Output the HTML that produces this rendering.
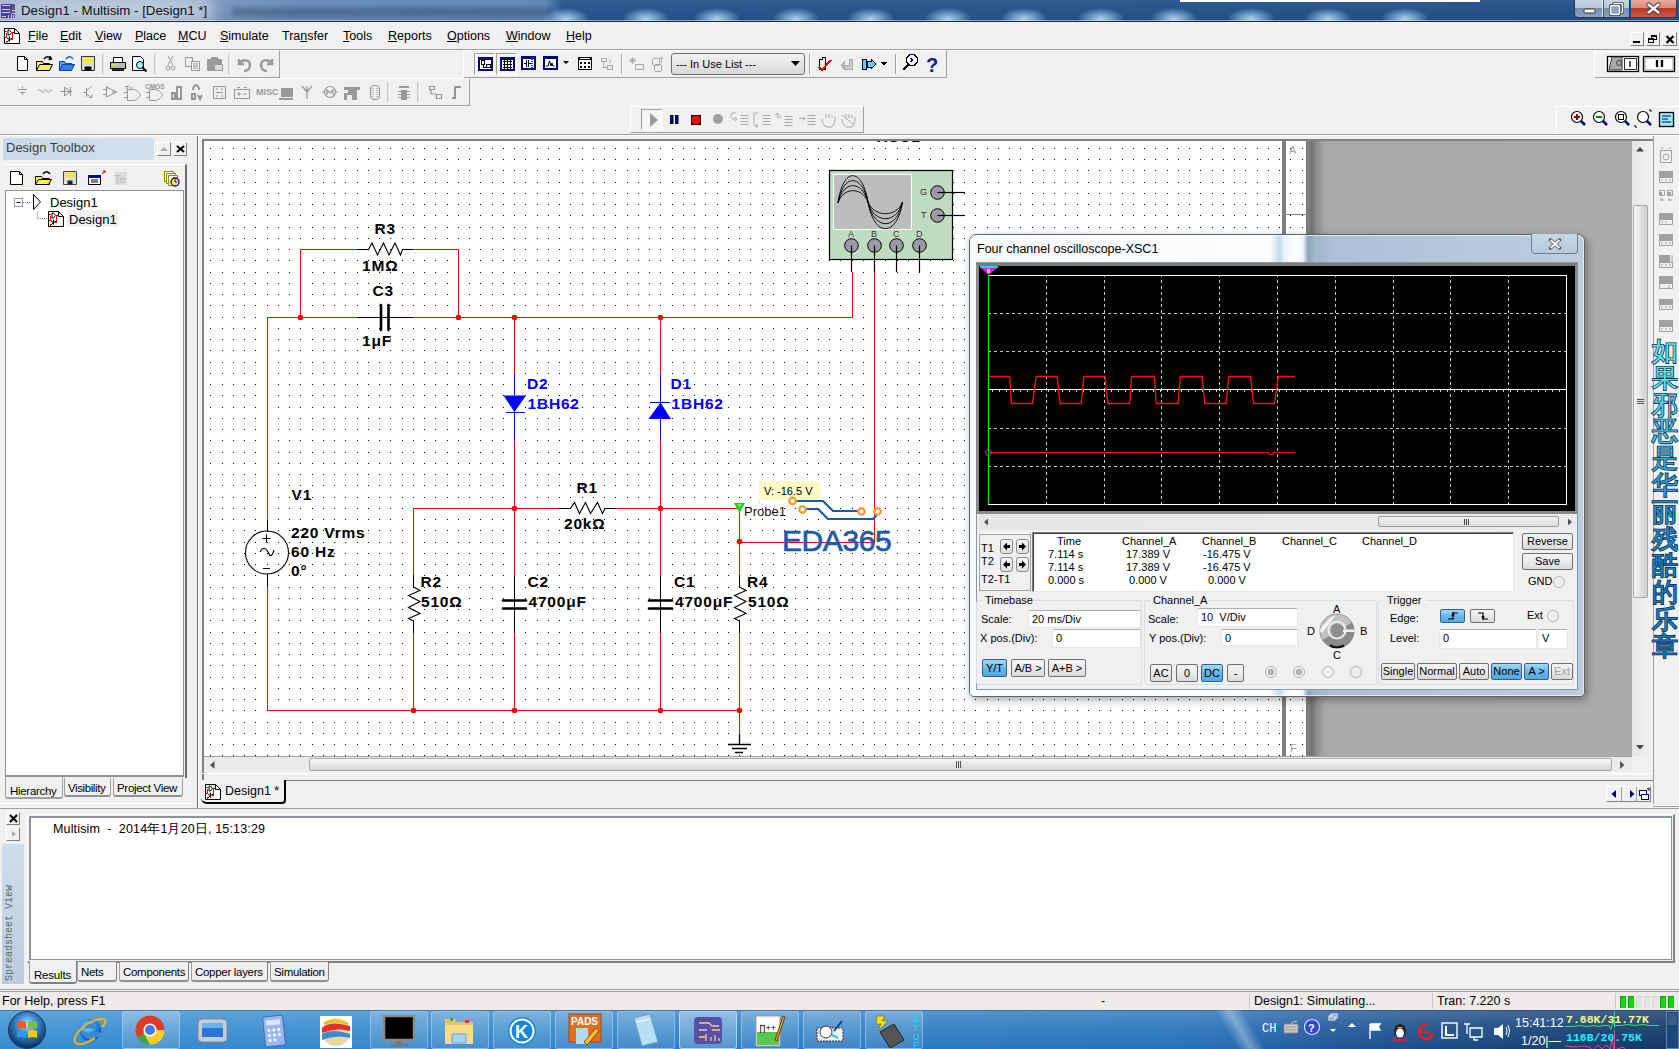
<!DOCTYPE html>
<html><head><meta charset="utf-8">
<style>
*{box-sizing:border-box}
html,body{margin:0;padding:0}
body{width:1679px;height:1049px;position:relative;overflow:hidden;background:#f0f0f0;font-family:"Liberation Sans",sans-serif;font-size:12px;color:#000}
.a{position:absolute}
.t{position:absolute;white-space:nowrap;line-height:1}
u{text-decoration:underline;text-underline-offset:1px;text-decoration-thickness:1px}
</style></head><body>

<!-- TITLE BAR -->
<div class="a" id="title" style="left:0;top:0;width:1679px;height:22px;background:linear-gradient(90deg,#a4b8d0 0,#aabdd4 150px,#9ab0cc 200px,#7494be 225px,#6088b8 300px,#5a84b6 545px,#23528c 562px,#22508a 100%)">
  <div class="a" style="left:0;top:0;width:1679px;height:21px;background:radial-gradient(ellipse 24px 11px at 566px 19px,rgba(185,222,248,.95),rgba(160,205,240,.5) 55%,rgba(160,205,240,0) 100%),radial-gradient(ellipse 24px 11px at 646px 19px,rgba(185,222,248,.95),rgba(160,205,240,.5) 55%,rgba(160,205,240,0) 100%),radial-gradient(ellipse 24px 11px at 717px 19px,rgba(185,222,248,.95),rgba(160,205,240,.5) 55%,rgba(160,205,240,0) 100%),radial-gradient(ellipse 24px 11px at 796px 19px,rgba(185,222,248,.95),rgba(160,205,240,.5) 55%,rgba(160,205,240,0) 100%),radial-gradient(ellipse 24px 11px at 871px 19px,rgba(185,222,248,.95),rgba(160,205,240,.5) 55%,rgba(160,205,240,0) 100%),radial-gradient(ellipse 24px 11px at 948px 19px,rgba(185,222,248,.95),rgba(160,205,240,.5) 55%,rgba(160,205,240,0) 100%),radial-gradient(ellipse 24px 11px at 1024px 19px,rgba(185,222,248,.95),rgba(160,205,240,.5) 55%,rgba(160,205,240,0) 100%),radial-gradient(ellipse 24px 11px at 1101px 19px,rgba(185,222,248,.95),rgba(160,205,240,.5) 55%,rgba(160,205,240,0) 100%),radial-gradient(ellipse 24px 11px at 1174px 19px,rgba(185,222,248,.95),rgba(160,205,240,.5) 55%,rgba(160,205,240,0) 100%),radial-gradient(ellipse 24px 11px at 1251px 19px,rgba(185,222,248,.95),rgba(160,205,240,.5) 55%,rgba(160,205,240,0) 100%),radial-gradient(ellipse 24px 11px at 1328px 19px,rgba(185,222,248,.95),rgba(160,205,240,.5) 55%,rgba(160,205,240,0) 100%),radial-gradient(ellipse 24px 11px at 1405px 19px,rgba(185,222,248,.95),rgba(160,205,240,.5) 55%,rgba(160,205,240,0) 100%)"></div>
  <div class="a" style="left:0;top:0;width:1679px;height:21px;background:linear-gradient(180deg,rgba(255,255,255,.06),rgba(0,0,0,.03))"></div>
<div class="a" style="left:1180px;top:0;width:300px;height:2px;background:#fff"></div>
  <svg class="a" style="left:1px;top:4px" width="15" height="14"><rect x="0" y="0" width="14" height="14" rx="1" fill="#4a3c9a"/><path d="M1 1.5H9M1 5.5H9M1 8.5H9" stroke="#d8d0f0" stroke-width="1"/><path d="M11 6.5H14M11 9.5H14M1 12.5H5M1 15.5H5" stroke="#f0c878" stroke-width="1"/><path d="M7.5 11V14M10.5 10V14M12.5 11V14" stroke="#c8c0f0"/></svg>
  <div class="a" style="left:232px;top:8px;width:320px;height:8px;background:rgba(35,45,75,.35);filter:blur(2.5px)"></div><div class="a" style="left:14px;top:2px;width:200px;height:18px;background:rgba(220,230,242,.35);filter:blur(4px);border-radius:8px"></div><div class="t" style="left:21px;top:4px;font-size:13.3px;color:#111">Design1 - Multisim - [Design1 *]</div>
  <div class="a" style="left:1574px;top:0;width:103px;height:18px;border:1px solid #2e3c50;border-top:none;border-radius:0 0 5px 5px;overflow:hidden;background:linear-gradient(90deg,transparent 0,transparent 55px,rgba(0,0,0,0) 55px)">
   <div class="a" style="left:0;top:0;width:28px;height:17px;background:linear-gradient(180deg,#c6d3e2 0,#b8c8da 45%,#7890ae 50%,#8aa2be 100%);border-right:1px solid #e8eef5"></div>
   <div class="a" style="left:29px;top:0;width:26px;height:17px;background:linear-gradient(180deg,#c6d3e2 0,#b8c8da 45%,#7890ae 50%,#8aa2be 100%);border-right:1px solid #6a1a10"></div>
   <div class="a" style="left:56px;top:0;width:47px;height:17px;background:linear-gradient(180deg,#e8aaa0 0,#d88a7c 45%,#b83a24 50%,#d05a40 100%)"></div>
  </div>
  <svg class="a" style="left:1574px;top:0" width="103" height="18">
   <rect x="10" y="9" width="11" height="4" rx="1" fill="#fff" stroke="#333" stroke-width="1"/>
   <rect x="39.5" y="3.5" width="9" height="9" rx="1" fill="none" stroke="#333" stroke-width="3"/><rect x="39.5" y="3.5" width="9" height="9" rx="1" fill="none" stroke="#fff" stroke-width="1.5"/>
   <rect x="36.5" y="5.5" width="9" height="9" rx="1" fill="#8aa2be" stroke="#333" stroke-width="3"/><rect x="36.5" y="5.5" width="9" height="9" rx="1" fill="#8aa2be" stroke="#fff" stroke-width="1.5"/>
   <path d="M74.5 4.5L84.5 12.5M84.5 4.5L74.5 12.5" stroke="#3a3a3a" stroke-width="4.2" stroke-linecap="round"/>
   <path d="M74.5 4.5L84.5 12.5M84.5 4.5L74.5 12.5" stroke="#fff" stroke-width="2.4" stroke-linecap="round"/>
  </svg>
  <div class="a" style="left:0;top:20px;width:1679px;height:1px;background:rgba(220,232,242,.55)"></div><div class="a" style="left:0;top:21px;width:1679px;height:1px;background:#1e2e40"></div>
</div>

<!-- MENU BAR -->
<div class="a" style="left:0;top:22px;width:1679px;height:27px;background:#f0f0f0"></div>
<div class="a" style="left:0;top:49px;width:1679px;height:1px;background:#a0a0a0"></div>


<!-- MENU -->
<svg class="a" style="left:4px;top:28px" width="17" height="17" viewBox="0 0 17 17"><path d="M0.5 0.5H10.5L15.5 5.5V15.5H0.5z" fill="#fff" stroke="#000"/><path d="M10.5 0.5V5.5H15.5" fill="none" stroke="#000"/><path d="M1 3.5H3M2.5 5V9.5M1 9.5H3M8.5 4.5V11.5M8 4.5H10M7 11.5H9M2.5 13V15" stroke="#f00" fill="none"/><path d="M4 2h1.5l2 2.5-2 2.5H4z" fill="none" stroke="#000"/><path d="M5.5 8.5v5M3 10l2.5 1.5 3-1.5M3 14l2.5-2.5" fill="none" stroke="#000"/></svg>
<div class="t" style="left:28px;top:30px;font-size:12.5px"><u>F</u>ile</div>
<div class="t" style="left:60px;top:30px;font-size:12.5px"><u>E</u>dit</div>
<div class="t" style="left:95px;top:30px;font-size:12.5px"><u>V</u>iew</div>
<div class="t" style="left:135px;top:30px;font-size:12.5px"><u>P</u>lace</div>
<div class="t" style="left:178px;top:30px;font-size:12.5px"><u>M</u>CU</div>
<div class="t" style="left:220px;top:30px;font-size:12.5px"><u>S</u>imulate</div>
<div class="t" style="left:282px;top:30px;font-size:12.5px">Tra<u>n</u>sfer</div>
<div class="t" style="left:343px;top:30px;font-size:12.5px"><u>T</u>ools</div>
<div class="t" style="left:388px;top:30px;font-size:12.5px"><u>R</u>eports</div>
<div class="t" style="left:447px;top:30px;font-size:12.5px"><u>O</u>ptions</div>
<div class="t" style="left:506px;top:30px;font-size:12.5px"><u>W</u>indow</div>
<div class="t" style="left:566px;top:30px;font-size:12.5px"><u>H</u>elp</div>
<!-- MDI buttons -->
<div class="a" style="left:1630px;top:32px;width:14px;height:14px;background:#f0f0f0;border:1px solid;border-color:#fff #808080 #808080 #fff"></div>
<div class="a" style="left:1633px;top:41px;width:7px;height:2px;background:#000"></div>
<div class="a" style="left:1646px;top:32px;width:14px;height:14px;background:#f0f0f0;border:1px solid;border-color:#fff #808080 #808080 #fff"></div>
<div class="a" style="left:1651px;top:35px;width:6px;height:5px;border:1px solid #000;border-top-width:2px"></div>
<div class="a" style="left:1648px;top:38px;width:6px;height:5px;border:1px solid #000;border-top-width:2px;background:#f0f0f0"></div>
<div class="a" style="left:1662px;top:32px;width:15px;height:14px;background:#f0f0f0;border:1px solid;border-color:#fff #808080 #808080 #fff"></div>
<svg class="a" style="left:1665px;top:35px" width="10" height="9"><path d="M1.5 1L8.5 8M8.5 1L1.5 8" stroke="#000" stroke-width="2.2"/></svg>

<!-- TOOLBAR AREA -->

<!-- PANEL separator -->
<div class="a" style="left:0;top:134px;width:1679px;height:1px;background:#a0a0a0"></div>

<!-- SCHEMATIC -->
<div class="a" style="left:204px;top:140px;width:1080px;height:616px;background:#fff"></div>

<!-- STATUS BAR -->
<div class="a" style="left:0;top:989px;width:1679px;height:1px;background:#a0a0a0"></div>
<div class="a" style="left:0;top:991px;width:1679px;height:1px;background:#a0a0a0"></div>

<!-- TASKBAR -->
<div class="a" style="left:0;top:1010px;width:1679px;height:39px;background:linear-gradient(180deg,#3f86c6,#2d79bd 50%,#2a73b5)"></div>

<!-- TOOLBARS -->
<div class="a" style="left:0;top:50px;width:280px;height:28px;border-top:1px solid #fff;border-right:1px solid #a0a0a0;border-bottom:1px solid #a0a0a0"></div>
<div class="a" style="left:463px;top:50px;width:484px;height:28px;border-left:1px solid #fff;border-top:1px solid #fff;border-right:1px solid #a0a0a0;border-bottom:1px solid #a0a0a0"></div>
<div class="a" style="left:1594px;top:51px;width:85px;height:27px;border-left:1px solid #fff;border-top:1px solid #fff;border-bottom:1px solid #a0a0a0"></div>
<div class="a" style="left:0;top:78px;width:470px;height:28px;border-top:1px solid #fff;border-right:1px solid #a0a0a0;border-bottom:1px solid #a0a0a0"></div>
<div class="a" style="left:630px;top:106px;width:234px;height:27px;border-left:1px solid #fff;border-top:1px solid #fff;border-right:1px solid #a0a0a0;border-bottom:1px solid #a0a0a0"></div>
<div class="a" style="left:1556px;top:106px;width:123px;height:28px;border-left:1px solid #fff;border-top:1px solid #fff"></div>

<!-- standard toolbar icons -->
<svg class="a" style="left:0;top:50px" width="280" height="28">
 <g stroke="#000" fill="#fff" stroke-width="1">
  <path d="M17.5 6.5h7l3 3v11h-10z"/><path d="M24.5 6.5v3h3" fill="none"/>
  <path d="M36.5 11.5h6l1 2h6v7h-13z" fill="#ffff40"/><path d="M36.5 20.5l3-6h13l-3 6z" fill="#f8f060"/><path d="M44 9c2-3 5-3 7 0" fill="none" stroke-width="1.5"/><path d="M50 6l2 3-3 1z" fill="#000"/>
  <path d="M59.5 11.5h5l1 2h6v7h-12z" fill="#5aa0f0" stroke="#1040a0"/><path d="M59.5 20.5l3-6h12l-3 6z" fill="#3080e0" stroke="#1040a0"/><path d="M66 9c2-3 5-3 7 0" fill="none" stroke="#1060d0" stroke-width="1.5"/>
  <path d="M81.5 6.5h13v14h-13z" fill="#ddd" stroke="#333"/><path d="M83.5 7.5h9v6h-9z" fill="#f4e640" stroke="none"/><path d="M84.5 16.5h7v4h-7z" fill="#000" stroke="none"/>
 </g>
 <path d="M103 4v20" stroke="#a0a0a0"/><path d="M104 4v20" stroke="#fff"/>
 <g stroke="#000" fill="#fff">
  <path d="M113.5 7.5h9v5h-9z"/><path d="M110.5 12.5h15v6h-15z" fill="#bbb"/><path d="M112.5 18.5h11v2h-11z" fill="#444"/><path d="M112 15h4" stroke="#ff0"/>
  <path d="M132.5 6.5h8l3 3v11h-11z"/><circle cx="140" cy="15" r="3.5" fill="#9ff" stroke="#000"/><path d="M142.5 17.5l4 4" stroke-width="2"/>
 </g>
 <path d="M155 4v20" stroke="#a0a0a0"/><path d="M156 4v20" stroke="#fff"/>
 <g stroke="#999" fill="none" stroke-width="1">
  <path d="M168 6l5 9M173 6l-5 9"/><circle cx="168" cy="18" r="2"/><circle cx="173" cy="18" r="2"/>
  <path d="M185.5 7.5h7v9h-7z"/><path d="M191.5 11.5h8v9h-8z" fill="#f0f0f0"/><path d="M193 14h5M193 16h5M193 18h5"/>
  <path d="M207.5 9.5h14v11h-14z" fill="#999"/><path d="M211.5 7.5h6v3h-6z" fill="#999"/><path d="M214.5 14.5h8v6h-8z" fill="#ddd"/>
 </g>
 <path d="M229 4v20" stroke="#a0a0a0"/><path d="M230 4v20" stroke="#fff"/>
 <g stroke="#999" fill="none" stroke-width="2.5">
  <path d="M239 9v5h5"/><path d="M239 14c3-5 11-5 11 1c0 4-3 6-6 6"/>
  <path d="M272 9v5h-5"/><path d="M272 14c-3-5-11-5-11 1c0 4 3 6 6 6"/>
 </g>
</svg>

<!-- component toolbar icons -->
<svg class="a" style="left:0;top:78px" width="470" height="28">
 <g stroke="#959595" fill="none" stroke-width="1">
  <path d="M22.5 8.5v2M18 11.5h9M20 14.5h5M22.5 15v2"/>
  <path d="M38 13c1-2 2-2 3 0s2 2 3 0 2-2 3 0 2 2 3 0 1-1 2 0"/>
  <path d="M60 13.5h12M64.5 9v9M64.5 9l6 4.5-6 4.5M70.5 9v9"/>
  <path d="M83 14.5h3M86.5 10v9M86.5 12.5l5-4M86.5 16l5 3.5M89 19.5h3v-3"/>
  <path d="M103 11.5h3M103 16.5h3M106.5 9v10l10-5zM112 14h5M107 8v3"/>
  <path d="M124 14.5h3M124 19.5h3M127.5 11.5h5c5 0 7 4 8 5.5c-1 1.5-3 5.5-8 5.5h-5z"/><path d="M125 8.5h4M127 8.5v3M131 8.5v3h2" stroke-width="1.1"/>
  <path d="M146 14.5h3M146 19.5h3M149.5 11.5h5c5 0 7 4 8 5.5c-1 1.5-3 5.5-8 5.5h-5z"/>
 </g>
 <text x="145" y="11" font-size="6.5" font-family="Liberation Sans" font-weight="bold" fill="#959595">CMOS</text>
 <g stroke="#959595" fill="none" stroke-width="2">
  <path d="M172 15v6h3v-6zM177 9h4v12h-4z"/>
  <path d="M193 12c0-3 2-5 3-5s3 2 3 5M192 16v5h3v-5zM198 17l2 4 2-4M200 21v-3M196 20h-2"/>
 </g>
 <g stroke="#959595" fill="none" stroke-width="1">
  <path d="M213.5 8.5h12v12h-12zM216 11h2M221 11h2M216 14.5h7M216 18h2M221 18h2"/>
  <path d="M234.5 11.5h15v9h-15zM237 9.5h3M244 9.5h3M237 16h4M239 14v4M243.5 16h3"/>
 </g>
 <text x="256" y="17" font-size="9" font-family="Liberation Sans" font-weight="bold" fill="#999">MISC</text>
 <g fill="#999" stroke="none">
  <path d="M281 10h12v9h-12zM279 20h14v2h-14z"/>
  <path d="M344 9h16v3h-3v10h-5v-5h-5v5h-3v-7h4v-3h-4z"/>
  <path d="M399 8h10v2h-10zM401 12h6v10h-6zM398 13h3v1h-3zM398 16h3v1h-3zM398 19h3v1h-3zM407 13h3v1h-3zM407 16h3v1h-3zM407 19h3v1h-3z"/>
 </g>
 <g stroke="#959595" fill="none" stroke-width="1.2">
  <path d="M302 8l5 6 5-6M307 8v13"/>
  <circle cx="330" cy="14" r="5.5"/><path d="M322 14h2.5M335.5 14h2.5M327 17v-5l3 3 3-3v5"/>
  <rect x="370.5" y="7.5" width="9" height="14" rx="4"/><path d="M373 10v9M377 10v9" stroke-dasharray="1 1"/>
  <path d="M429.5 8.5h5v3h-5zM436.5 16.5h5v4h-5zM431 12v4h5" /><path d="M452 20h3v-11h6"  stroke-width="2"/>
 </g>
 <path d="M388 4v20" stroke="#a0a0a0"/><path d="M389 4v20" stroke="#fff"/>
 <path d="M418 4v20" stroke="#a0a0a0"/><path d="M419 4v20" stroke="#fff"/>
</svg>

<!-- middle toolbar -->
<div class="a" style="left:474px;top:53px;width:21px;height:22px;border:1px solid;border-color:#a0a0a0 #fff #fff #a0a0a0;background:#f5f5f5"></div>
<div class="a" style="left:496px;top:53px;width:21px;height:22px;border:1px solid;border-color:#a0a0a0 #fff #fff #a0a0a0;background:#f5f5f5"></div>
<svg class="a" style="left:463px;top:50px" width="484" height="28" shape-rendering="crispEdges">
 <g fill="#000080"><rect x="15" y="7" width="15" height="14"/><rect x="37" y="7" width="15" height="14"/><rect x="58" y="6" width="15" height="14"/><rect x="80" y="6" width="15" height="14"/></g>
 <g fill="#fff"><rect x="17" y="10" width="11" height="9"/><rect x="39" y="10" width="11" height="9"/><rect x="60" y="9" width="11" height="9"/><rect x="82" y="9" width="11" height="9"/></g>
 <g fill="#000">
  <rect x="18" y="10" width="4" height="1"/><rect x="18" y="10" width="1" height="5"/><rect x="21" y="10" width="1" height="5"/><rect x="18" y="14" width="4" height="1"/><rect x="20" y="15" width="1" height="3"/><rect x="20" y="17" width="3" height="1"/>
  <rect x="23" y="14" width="5" height="1"/><rect x="23" y="14" width="1" height="4"/><rect x="27" y="14" width="1" height="4"/><rect x="23" y="17" width="5" height="1"/>
  <rect x="40" y="11" width="9" height="1"/><rect x="40" y="14" width="9" height="1"/><rect x="40" y="17" width="9" height="1"/><rect x="41" y="10" width="1" height="9"/><rect x="44" y="10" width="1" height="9"/><rect x="47" y="10" width="1" height="9"/>
  <rect x="61" y="13" width="2" height="1"/><rect x="63" y="10" width="1" height="7"/><rect x="65" y="10" width="1" height="7"/><rect x="66" y="13" width="2" height="1"/>
 </g>
 <g fill="#e00"><rect x="68" y="9" width="2" height="1"/><rect x="68" y="11" width="2" height="1"/><rect x="68" y="13" width="2" height="1"/><rect x="68" y="15" width="2" height="1"/><rect x="68" y="17" width="2" height="1"/></g>
 <g shape-rendering="auto"><path d="M83 16h2l1.5-5 1.5 5 1-3 1 3h1.5" stroke="#000" fill="none" stroke-width="1"/><path d="M100 11h6l-3 3z" fill="#000"/></g>
 <rect x="115" y="7" width="14" height="13" fill="#000"/><rect x="116" y="10" width="12" height="9" fill="#fff"/><rect x="117" y="8" width="10" height="1" fill="#fff"/>
 <g fill="#000"><rect x="117" y="12" width="2" height="2"/><rect x="121" y="12" width="2" height="2"/><rect x="125" y="12" width="2" height="2"/><rect x="117" y="16" width="2" height="2"/><rect x="121" y="16" width="2" height="2"/><rect x="125" y="16" width="2" height="2"/></g>
 <g stroke="#a8a8a8" fill="none">
  <path d="M138.5 8.5h5v3h-5zM144.5 15.5h5v4h-5zM140 12v5h4M146 9l2 2-2 2"/>
  <path d="M167 8l5 5M172 8l-5 5M166 10h7M169 7v7M172.5 14.5h8v5h-8z"/>
  <circle cx="193" cy="12" r="4"/><circle cx="195" cy="18" r="4"/><path d="M198 7v6M196 9l2-2 2 2"/>
 </g>
 <path d="M158 4v20" stroke="#a0a0a0"/><path d="M159 4v20" stroke="#fff"/>
 <path d="M346 4v20" stroke="#a0a0a0"/><path d="M347 4v20" stroke="#fff"/>
 <path d="M432 4v20" stroke="#a0a0a0"/><path d="M433 4v20" stroke="#fff"/>
 <g stroke="#000" fill="none">
  <path d="M356.5 9.5h3v-2h3v12h-6z"/><path d="M356 17l3 3 9-10" stroke="#e00" stroke-width="2"/>
  <path d="M378 15h8v-6h3v10h-8zM378 15l3-3v6z" stroke="#aaa" fill="#ccc"/>
  <path d="M399.5 9.5h4v10h-4zM404 11h4v-2l5 5-5 5v-2h-4z" fill="#6cf" stroke="#000"/>
  <path d="M418 12h6l-3 3z" fill="#000"/>
  <circle cx="449" cy="10" r="5.5" stroke-width="1.3"/><path d="M445 15l-5 5" stroke-width="2"/><path d="M447 8l3 2-3 2" stroke="#00a"/>
 </g>
 <text x="463" y="22" font-size="20" font-weight="bold" font-family="Liberation Sans" fill="#1a1a8c">?</text>
</svg>
<div class="a" style="left:671px;top:53px;width:134px;height:22px;border:1px solid #707070;border-radius:3px;background:linear-gradient(#f2f2f2,#e6e6e6 50%,#d8d8d8)"></div>
<div class="t" style="left:676px;top:59px;font-size:11px;color:#000">--- In Use List ---</div>
<svg class="a" style="left:790px;top:60px" width="12" height="8"><path d="M1 1h9l-4.5 5z" fill="#000"/></svg>

<!-- right toolbar -->
<svg class="a" style="left:1594px;top:51px" width="85" height="27">
 <rect x="13.5" y="5.5" width="31" height="15" fill="#fff" stroke="#000" stroke-width="1.3"/>
 <path d="M15 19l3-13h10v13z" fill="#aaa" stroke="#333"/><circle cx="25" cy="12" r="2.5" fill="none" stroke="#444"/>
 <rect x="30.5" y="7.5" width="12" height="11" fill="#fff" stroke="#333"/><path d="M36 10v6" stroke="#000" stroke-width="1.3"/>
 <rect x="49.5" y="5.5" width="31" height="15" fill="#fff" stroke="#000" stroke-width="1.3"/><rect x="51" y="7" width="28" height="12" fill="none" stroke="#999"/>
 <path d="M63 9v7M68 9v7" stroke="#000" stroke-width="2.3"/>
</svg>

<!-- sim toolbar -->
<div class="a" style="left:641px;top:109px;width:21px;height:21px;border:1px solid;border-color:#a0a0a0 #fff #fff #a0a0a0;background:#f5f5f5"></div>
<svg class="a" style="left:630px;top:106px" width="234" height="27">
 <path d="M20 7l8 7-8 7z" fill="#9a9a9a"/>
 <rect x="40.5" y="9.5" width="2.5" height="8" fill="#00c" stroke="#000"/><rect x="45.5" y="9.5" width="2.5" height="8" fill="#00c" stroke="#000"/>
 <rect x="61.5" y="9.5" width="9" height="9" fill="#f00" stroke="#000"/>
 <circle cx="88" cy="13" r="5" fill="#a0a0a0"/>
 <g stroke="#a8a8a8" fill="none">
  <path d="M106 7h-3c-1 0-2 1-2 3s1 3 2 3h4M105 11l2 2-2 2M110.5 9.5h8M110.5 12.5h8M110.5 15.5h8M110.5 18.5h8"/>
  <path d="M128 7h-3c-1 0-1 1-1 2v9c0 1 1 2 2 2h2M126 22l2-2-2-2M132.5 9.5h8M132.5 12.5h8M132.5 15.5h8M132.5 18.5h8"/>
  <path d="M147.5 7v4h4M145.5 9l2-2 2 2M154.5 10.5h8M154.5 13.5h8M154.5 16.5h8M154.5 19.5h8"/>
  <path d="M169 12.5h6M173 10.5l2 2-2 2M177.5 9.5h8M177.5 12.5h8M177.5 15.5h8M177.5 18.5h8"/>
  <path d="M196 21c-3-3-4-5-4-8M196 21h6c2-2 3-5 3-8M199 12v-4M202 12v-3M205 13v-2M196 12v-4"/>
  <path d="M216 21c-3-3-4-5-4-8M216 21h6c2-2 3-5 3-8M219 12v-4M222 12v-3M225 13v-2M216 12v-4M212 9l12 10"/>
 </g>
</svg>

<!-- zoom toolbar -->
<svg class="a" style="left:1556px;top:106px" width="123" height="28">
 <g stroke="#000" fill="#fff" stroke-width="1.2">
  <circle cx="21" cy="11" r="5.5"/><circle cx="43" cy="11" r="5.5"/><circle cx="65" cy="11" r="5.5"/><circle cx="87" cy="11" r="5.5"/>
 </g>
 <g stroke="#000080" stroke-width="2.5"><path d="M25 15l4 4M47 15l4 4M69 15l4 4M91 15l4 4"/></g>
 <path d="M21 8v6M18 11h6" stroke="#800" stroke-width="2"/>
 <path d="M40 11h6" stroke="#080" stroke-width="2"/>
 <rect x="62.5" y="8.5" width="5" height="5" fill="none" stroke="#000"/>
 <path d="M93 4h2v2M79 19v2h2" stroke="#000" fill="none"/>
 <rect x="103.5" y="6.5" width="14" height="14" fill="#9ef" stroke="#000" stroke-width="1.3"/><path d="M106 10h9M106 13h6M106 16h9" stroke="#000080"/>
</svg>
<!-- LEFT PANEL -->
<div class="a" style="left:0;top:135px;width:1679px;height:1px;background:#fff"></div>
<div class="a" style="left:3px;top:138px;width:151px;height:22px;background:linear-gradient(90deg,#c9d9ea,#d3e0ee)"></div>
<div class="t" style="left:6px;top:141px;font-size:13px;color:#3c3c3c">Design Toolbox</div>
<div class="a" style="left:157px;top:142px;width:14px;height:14px;border:1px solid;border-color:#fff #808080 #808080 #fff"></div>
<svg class="a" style="left:159px;top:146px" width="10" height="6"><path d="M1 5l4-4 4 4z" fill="#aaa"/></svg>
<div class="a" style="left:173px;top:142px;width:14px;height:14px;border:1px solid;border-color:#fff #808080 #808080 #fff"></div>
<svg class="a" style="left:176px;top:145px" width="9" height="8"><path d="M1 1l7 6M8 1l-7 6" stroke="#000" stroke-width="2"/></svg>
<div class="a" style="left:4px;top:164px;width:183px;height:614px;border-top:1px solid #fff;border-right:2px solid #6c6c6c"></div>
<svg class="a" style="left:4px;top:166px" width="180" height="24">
 <g stroke="#000" fill="#fff">
  <path d="M6.5 5.5h9l3 3v10h-12z"/><path d="M15.5 5.5v3h3" fill="none"/><path d="M16 18l2-2v2z" fill="#ff0" stroke="none"/>
  <path d="M31.5 10.5h6l1 2h7v6h-14z" fill="#ffff40"/><path d="M31.5 18.5l3-5h13l-3 5z" fill="#f8f060"/><path d="M39 8c2-3 5-3 7 0" fill="none" stroke-width="1.5"/>
  <path d="M59.5 5.5h13v13h-13z" fill="#ddd" stroke="#444"/><path d="M61.5 6.5h9v5h-9z" fill="#f4e640" stroke="none"/><path d="M63.5 14.5h5v4h-5z" fill="#222" stroke="none"/>
  <path d="M84.5 9.5h12v9h-12z"/><path d="M84.5 9.5h12v2h-12z" fill="#00a" stroke="#00a"/><path d="M87 14h7M87 16h7"/><path d="M98 8l3-3M101 5v2M101 5h-2" stroke="#a00"/>
 </g>
 <rect x="111" y="6" width="12" height="13" fill="#ddd"/><text x="110" y="17" font-size="11" fill="#bbb" font-family="Liberation Sans">Te</text>
 <g stroke="#8a8a00" fill="#fff" stroke-width="1">
  <path d="M160.5 5.5h9v10h-9z"/><path d="M162.5 7.5h9v10h-9z"/><path d="M164.5 9.5h9v10h-9z"/>
 </g>
 <circle cx="171" cy="16" r="4" fill="#ff0" stroke="#00c" stroke-width="1.3"/><path d="M171 13v3h2" stroke="#00c" fill="none"/>
</svg>
<div class="a" style="left:5px;top:190px;width:179px;height:587px;background:#fff;border:1px solid #8a929c;border-bottom:2px solid #8a929c"></div>
<svg class="a" style="left:5px;top:190px" width="120" height="40">
 <rect x="9.5" y="8.5" width="8" height="8" fill="#fff" stroke="#999"/><path d="M11.5 12.5h4" stroke="#00a"/>
 <path d="M18 12.5h8M42 28.5h-10M32.5 28.5v-8" stroke="#777" stroke-dasharray="1 1"/>
 <path d="M28.5 4.5v15l7-7.5z" fill="none" stroke="#000"/>
 
 <rect x="62" y="20" width="51" height="17" fill="#f0f0f0"/>
</svg>
<svg class="a" style="left:48px;top:211px" width="17" height="17" viewBox="0 0 17 17"><path d="M0.5 0.5H10.5L15.5 5.5V15.5H0.5z" fill="#fff" stroke="#000"/><path d="M10.5 0.5V5.5H15.5" fill="none" stroke="#000"/><path d="M1 3.5H3M2.5 5V9.5M1 9.5H3M8.5 4.5V11.5M8 4.5H10M7 11.5H9M2.5 13V15" stroke="#f00" fill="none"/><path d="M4 2h1.5l2 2.5-2 2.5H4z" fill="none" stroke="#000"/><path d="M5.5 8.5v5M3 10l2.5 1.5 3-1.5M3 14l2.5-2.5" fill="none" stroke="#000"/></svg>
<div class="t" style="left:50px;top:196px;font-size:13px">Design1</div>
<div class="t" style="left:69px;top:213px;font-size:13px">Design1</div>
<!-- panel tabs -->
<div class="a" style="left:5px;top:777px;width:58px;height:22px;background:#f0f0f0;border:1px solid #a0a0a0;border-top:none;border-radius:0 0 3px 3px;border-bottom:2px solid #a0a0a0"></div>
<div class="t" style="left:10px;top:786px;font-size:11.5px;letter-spacing:-0.3px">Hierarchy</div>
<div class="a" style="left:64px;top:778px;width:47px;height:19px;background:#f0f0f0;border:1px solid #a0a0a0;border-top:none;border-radius:0 0 3px 3px;border-bottom:2px solid #909090"></div>
<div class="t" style="left:68px;top:783px;font-size:11.5px;letter-spacing:-0.4px">Visibility</div>
<div class="a" style="left:113px;top:778px;width:70px;height:19px;background:#f0f0f0;border:1px solid #a0a0a0;border-top:none;border-radius:0 0 3px 3px;border-bottom:2px solid #909090"></div>
<div class="t" style="left:117px;top:783px;font-size:11.5px;letter-spacing:-0.3px">Project View</div>
<div class="a" style="left:197px;top:136px;width:1px;height:672px;background:#707070"></div>
<div class="a" style="left:198px;top:136px;width:1px;height:672px;background:#fff"></div>
<!-- SCHEMATIC -->
<div class="a" style="left:202px;top:139px;width:1452px;height:642px;background:#f0f0f0;border-left:2px solid #808080;border-top:2px solid #808080;border-right:1px solid #a0a0a0;border-bottom:1px solid #a0a0a0"></div>
<svg class="a" style="left:0;top:0" width="1310" height="760" shape-rendering="crispEdges"><defs><pattern id="gd" patternUnits="userSpaceOnUse" x="210" y="148" width="45" height="45"><path d="M0 0h1v1h-1zM0 11h1v1h-1zM0 22h1v1h-1zM0 34h1v1h-1zM12 0h1v1h-1zM12 11h1v1h-1zM12 22h1v1h-1zM12 34h1v1h-1zM23 0h1v1h-1zM23 11h1v1h-1zM23 22h1v1h-1zM23 34h1v1h-1zM34 0h1v1h-1zM34 11h1v1h-1zM34 22h1v1h-1zM34 34h1v1h-1z" fill="#000"/></pattern></defs><rect x="204" y="141" width="1102" height="615" fill="#fff"/><rect x="204" y="141" width="1102" height="615" fill="url(#gd)"/></svg>
<div class="a" style="left:1282px;top:141px;width:4px;height:615px;background:#808080"></div>
<div class="a" style="left:1306px;top:141px;width:326px;height:615px;background:linear-gradient(90deg,#7a7a7a 0,#808080 4px,#6f6f6f 5px,#8e8e8e 11px,#a3a3a3 17px,#aaaaaa 22px,#ababab 100%)"></div>
<div class="a" style="left:1286px;top:214px;width:20px;height:1px;background:#808080"></div>
<div class="t" style="left:1289px;top:145px;font-size:11px;color:#a0a0a0">A</div>
<div class="t" style="left:1290px;top:743px;font-size:11px;color:#a0a0a0">F</div>
<svg class="a" style="left:0;top:0" width="1300" height="760"><path d="M267 317.5H358" stroke="#ff0000" stroke-width="1"/><path d="M357 317.5H413" stroke="#000" stroke-width="1"/><path d="M413 317.5H853" stroke="#ff0000" stroke-width="1"/><path d="M267.5 317V520" stroke="#ff0000" stroke-width="1"/><path d="M267.5 520V532" stroke="#000" stroke-width="1"/><path d="M267.5 574V587" stroke="#000" stroke-width="1"/><path d="M267.5 587V711" stroke="#ff0000" stroke-width="1"/><path d="M267 710.5H740" stroke="#ff0000" stroke-width="1"/><path d="M300.5 249V318" stroke="#ff0000" stroke-width="1"/><path d="M300 249.5H357" stroke="#ff0000" stroke-width="1"/><path d="M357 249.5H369" stroke="#000" stroke-width="1"/><path d="M402 249.5H413" stroke="#000" stroke-width="1"/><path d="M413 249.5H459" stroke="#ff0000" stroke-width="1"/><path d="M458.5 249V318" stroke="#ff0000" stroke-width="1"/><path d="M368.5 249.5L372 243L377.5 255L383.5 243L389 255L395 243L400.5 255L402.5 249.5" fill="none" stroke="#000" stroke-width="1.1"/><path d="M381 305V330M388.5 305V330" stroke="#000" stroke-width="2.6" stroke-linecap="round"/><path d="M514.5 317V374" stroke="#ff0000" stroke-width="1"/><path d="M514.5 374V441" stroke="#0000ff" stroke-width="1"/><path d="M514.5 441V576" stroke="#ff0000" stroke-width="1"/><path d="M514.5 576V633" stroke="#000" stroke-width="1"/><path d="M514.5 633V711" stroke="#ff0000" stroke-width="1"/><path d="M503.5 395.5H526L514.5 412z" fill="#0000ff"/><path d="M506 412.5H525" stroke="#0000ff" stroke-width="1"/><path d="M660.5 317V374" stroke="#ff0000" stroke-width="1"/><path d="M660.5 374V441" stroke="#0000ff" stroke-width="1"/><path d="M660.5 441V576" stroke="#ff0000" stroke-width="1"/><path d="M660.5 576V633" stroke="#000" stroke-width="1"/><path d="M660.5 633V711" stroke="#ff0000" stroke-width="1"/><path d="M648.5 419H671L660.5 402.5z" fill="#0000ff"/><path d="M650 402.5H670" stroke="#0000ff" stroke-width="1"/><path d="M503 600.5H526M503 608.5H526" stroke="#000" stroke-width="2.6" stroke-linecap="round"/><path d="M649 600.5H672M649 608.5H672" stroke="#000" stroke-width="2.6" stroke-linecap="round"/><path d="M413 508.5H559" stroke="#ff0000" stroke-width="1"/><path d="M559 508.5H571" stroke="#000" stroke-width="1"/><path d="M605 508.5H615" stroke="#000" stroke-width="1"/><path d="M615 508.5H740" stroke="#ff0000" stroke-width="1"/><path d="M570.5 508.5L574.5 502.5L579.5 513.5L585.5 502.5L590.5 513.5L597.5 502.5L602.5 513.5L605 508.5" fill="none" stroke="#000" stroke-width="1.1"/><path d="M413.5 509V575" stroke="#ff0000" stroke-width="1"/><path d="M413.5 575V588" stroke="#000" stroke-width="1"/><path d="M413.5 620V633" stroke="#000" stroke-width="1"/><path d="M413.5 633V711" stroke="#ff0000" stroke-width="1"/><path d="M413.5 587L420 590.5L408.5 595.5L420 601.5L408.5 607.5L420 613.5L408.5 618.5L413.5 621" fill="none" stroke="#000" stroke-width="1.1"/><path d="M739.5 509V575" stroke="#ff0000" stroke-width="1"/><path d="M739.5 575V588" stroke="#000" stroke-width="1"/><path d="M739.5 620V633" stroke="#000" stroke-width="1"/><path d="M739.5 633V734" stroke="#ff0000" stroke-width="1"/><path d="M739.5 587L746 590.5L734.5 595.5L746 601.5L734.5 607.5L746 613.5L734.5 618.5L739.5 621" fill="none" stroke="#000" stroke-width="1.1"/><path d="M739.5 734V745" stroke="#000" stroke-width="1.3"/><path d="M728 744.5H751M732 748.5H747M735 752.5H743" stroke="#000" stroke-width="1.3"/><path d="M852.5 272V317" stroke="#ff0000" stroke-width="1"/><path d="M874.5 272V542" stroke="#ff0000" stroke-width="1"/><path d="M739 542.5H875" stroke="#ff0000" stroke-width="1"/><circle cx="300.5" cy="317.5" r="2.8" fill="#ff0000"/><circle cx="458.5" cy="317.5" r="2.8" fill="#ff0000"/><circle cx="514.5" cy="317.5" r="2.8" fill="#ff0000"/><circle cx="660.5" cy="317.5" r="2.8" fill="#ff0000"/><circle cx="514.5" cy="508.5" r="2.8" fill="#ff0000"/><circle cx="660.5" cy="508.5" r="2.8" fill="#ff0000"/><circle cx="413.5" cy="710.5" r="2.8" fill="#ff0000"/><circle cx="514.5" cy="710.5" r="2.8" fill="#ff0000"/><circle cx="660.5" cy="710.5" r="2.8" fill="#ff0000"/><circle cx="739.5" cy="710.5" r="2.8" fill="#ff0000"/><circle cx="739.5" cy="541.5" r="2.8" fill="#ff0000"/><circle cx="267" cy="552.5" r="21.5" fill="none" stroke="#000" stroke-width="1.1"/><path d="M266.5 534.5V542.5M262.5 538.5H270.5M263 568.5H270" stroke="#000" stroke-width="1.1"/><path d="M260 552C263 546 266 548 268 552C270 557 272 557 274 550" fill="none" stroke="#000" stroke-width="1.1"/><rect x="829.5" y="170.5" width="123" height="89" fill="#c0dcc0" stroke="#000" stroke-width="1.2"/><rect x="833.5" y="174.5" width="78" height="55" fill="#bdbdbd" stroke="#fff" stroke-width="1"/><path d="M838 203C843 166.7 862 166.7 868 202C874 237.6 897 237.6 902.5 202" fill="none" stroke="#000" stroke-width="0.9"/><path d="M838 203C843 173.3 862 173.3 868 202C874 230.9 897 230.9 902.5 202" fill="none" stroke="#000" stroke-width="0.9"/><path d="M838 203C843 180.0 862 180.0 868 202C874 224.3 897 224.3 902.5 202" fill="none" stroke="#000" stroke-width="0.9"/><path d="M838 203C843 186.7 862 186.7 868 202C874 217.6 897 217.6 902.5 202" fill="none" stroke="#000" stroke-width="0.9"/><circle cx="851.5" cy="245.5" r="6.8" fill="#9c9aa4" stroke="#000" stroke-width="1"/><path d="M851.5 245.5V272" stroke="#000" stroke-width="1.2"/><circle cx="874.5" cy="245.5" r="6.8" fill="#9c9aa4" stroke="#000" stroke-width="1"/><path d="M874.5 245.5V272" stroke="#000" stroke-width="1.2"/><circle cx="896.5" cy="245.5" r="6.8" fill="#9c9aa4" stroke="#000" stroke-width="1"/><path d="M896.5 245.5V272" stroke="#000" stroke-width="1.2"/><circle cx="919.5" cy="245.5" r="6.8" fill="#9c9aa4" stroke="#000" stroke-width="1"/><path d="M919.5 245.5V272" stroke="#000" stroke-width="1.2"/><circle cx="937.5" cy="192.5" r="6.8" fill="#9c9aa4" stroke="#000" stroke-width="1"/><path d="M937.5 192.5H965" stroke="#000" stroke-width="1.2"/><circle cx="937.5" cy="215.5" r="6.8" fill="#9c9aa4" stroke="#000" stroke-width="1"/><path d="M937.5 215.5H965" stroke="#000" stroke-width="1.2"/></svg>
<div class="t" style="left:374.5px;top:221px;font-size:15.5px;font-weight:bold;letter-spacing:0.8px;color:#000">R3</div>
<div class="t" style="left:362px;top:258px;font-size:15.5px;font-weight:bold;letter-spacing:0.8px;color:#000">1MΩ</div>
<div class="t" style="left:372.5px;top:283px;font-size:15.5px;font-weight:bold;letter-spacing:0.8px;color:#000">C3</div>
<div class="t" style="left:362px;top:333px;font-size:15.5px;font-weight:bold;letter-spacing:0.8px;color:#000">1μF</div>
<div class="t" style="left:527px;top:376px;font-size:15.5px;font-weight:bold;letter-spacing:0.8px;color:#0000ff">D2</div>
<div class="t" style="left:527.5px;top:396px;font-size:15.5px;font-weight:bold;letter-spacing:0.8px;color:#0000ff">1BH62</div>
<div class="t" style="left:670.5px;top:376px;font-size:15.5px;font-weight:bold;letter-spacing:0.8px;color:#0000ff">D1</div>
<div class="t" style="left:671.5px;top:396px;font-size:15.5px;font-weight:bold;letter-spacing:0.8px;color:#0000ff">1BH62</div>
<div class="t" style="left:291.5px;top:486.5px;font-size:15.5px;font-weight:bold;letter-spacing:0.8px;color:#000">V1</div>
<div class="t" style="left:291px;top:525px;font-size:15.5px;font-weight:bold;letter-spacing:0.8px;color:#000">220 Vrms</div>
<div class="t" style="left:291px;top:544px;font-size:15.5px;font-weight:bold;letter-spacing:0.8px;color:#000">60 Hz</div>
<div class="t" style="left:291px;top:562.5px;font-size:15.5px;font-weight:bold;letter-spacing:0.8px;color:#000">0°</div>
<div class="t" style="left:420.5px;top:574px;font-size:15.5px;font-weight:bold;letter-spacing:0.8px;color:#000">R2</div>
<div class="t" style="left:421px;top:594px;font-size:15.5px;font-weight:bold;letter-spacing:0.8px;color:#000">510Ω</div>
<div class="t" style="left:527.5px;top:574px;font-size:15.5px;font-weight:bold;letter-spacing:0.8px;color:#000">C2</div>
<div class="t" style="left:528.5px;top:594px;font-size:15.5px;font-weight:bold;letter-spacing:0.8px;color:#000">4700μF</div>
<div class="t" style="left:674px;top:574px;font-size:15.5px;font-weight:bold;letter-spacing:0.8px;color:#000">C1</div>
<div class="t" style="left:675px;top:594px;font-size:15.5px;font-weight:bold;letter-spacing:0.8px;color:#000">4700μF</div>
<div class="t" style="left:747px;top:574px;font-size:15.5px;font-weight:bold;letter-spacing:0.8px;color:#000">R4</div>
<div class="t" style="left:748px;top:594px;font-size:15.5px;font-weight:bold;letter-spacing:0.8px;color:#000">510Ω</div>
<div class="t" style="left:576.5px;top:479.5px;font-size:15.5px;font-weight:bold;letter-spacing:0.8px;color:#000">R1</div>
<div class="t" style="left:564px;top:515.5px;font-size:15.5px;font-weight:bold;letter-spacing:0.8px;color:#000">20kΩ</div>
<div class="t" style="left:848px;top:230px;font-size:9px;color:#333">A</div>
<div class="t" style="left:871px;top:230px;font-size:9px;color:#333">B</div>
<div class="t" style="left:893px;top:230px;font-size:9px;color:#333">C</div>
<div class="t" style="left:916px;top:230px;font-size:9px;color:#333">D</div>
<div class="t" style="left:920px;top:188px;font-size:9px;color:#333">G</div>
<div class="t" style="left:921px;top:211px;font-size:9px;color:#333">T</div>
<div class="a" style="left:870px;top:141px;width:60px;height:2px;overflow:hidden"><div class="t" style="left:7px;top:-11.6px;font-size:15.5px;font-weight:bold;letter-spacing:0.8px">XSC1</div></div>
<svg class="a" style="left:730px;top:480px" width="170" height="50"><path d="M4 23L15 23L9.5 33z" fill="#22cc22"/><path d="M7 24L9.5 28L12 24" fill="#66ee66"/><path d="M29 20V24H33" fill="none" stroke="#ddd"/></svg>
<div class="a" style="left:759px;top:481px;width:62px;height:19px;background:#fdf9c4;border-radius:2px"></div>
<div class="t" style="left:764px;top:486px;font-size:11px;color:#000">V: -16.5 V</div>
<div class="t" style="left:744px;top:505px;font-size:13px;color:#111">Probe1</div>
<svg class="a" style="left:780px;top:490px" width="110" height="40"><g stroke="#1a5aa8" stroke-width="2.2" fill="none"><path d="M16 11H43L53 21H80"/><path d="M26 19H38L48 29H93L97 25"/></g><g stroke="#f0a030" stroke-width="2.4" fill="#fff"><circle cx="12.5" cy="11" r="3.2"/><circle cx="22.5" cy="19.5" r="3.2"/><circle cx="81.5" cy="21.5" r="3.2"/><circle cx="97.5" cy="21.5" r="3.2"/></g></svg>
<div class="t" style="left:782px;top:526px;font-size:30px;color:#1d5ba8;letter-spacing:-0.4px;-webkit-text-stroke:0.7px #1d5ba8">EDA365</div>
<!-- SCROLLBARS -->
<div class="a" style="left:204px;top:756px;width:1428px;height:1px;background:#a0a0a0"></div>
<div class="a" style="left:204px;top:757px;width:1428px;height:15px;background:linear-gradient(#e9e9e9,#eeeeee)"></div>
<svg class="a" style="left:207px;top:759px" width="10" height="12"><path d="M7.5 2L3 6L7.5 10z" fill="#555"/></svg>
<div class="a" style="left:309px;top:758px;width:1303px;height:13px;border:1px solid #a8a8a8;border-radius:2px;background:linear-gradient(#f8f8f8,#e6e6e6 50%,#d6d6d6)"></div>
<svg class="a" style="left:953px;top:760px" width="12" height="9"><path d="M3.5 1v7M5.5 1v7M7.5 1v7" stroke="#555"/></svg>
<svg class="a" style="left:1617px;top:759px" width="10" height="12"><path d="M3 2L7.5 6L3 10z" fill="#555"/></svg>
<div class="a" style="left:1632px;top:141px;width:17px;height:615px;background:linear-gradient(90deg,#e6e6e6,#f0f0f0)"></div>
<svg class="a" style="left:1634px;top:144px" width="12" height="10"><path d="M2 7.5L6 3L10 7.5z" fill="#444"/></svg>
<svg class="a" style="left:1634px;top:742px" width="12" height="10"><path d="M2 3L6 7.5L10 3z" fill="#444"/></svg>
<div class="a" style="left:1633px;top:205px;width:15px;height:393px;border:1px solid #a8a8a8;border-radius:2px;background:linear-gradient(90deg,#f6f6f6,#e2e2e2 50%,#d0d0d0)"></div>
<svg class="a" style="left:1635px;top:396px" width="11" height="12"><path d="M2 3.5h7M2 5.5h7M2 7.5h7" stroke="#555"/></svg>
<div class="a" style="left:1632px;top:757px;width:17px;height:15px;background:#f0f0f0"></div>
<div class="a" style="left:202px;top:773px;width:1452px;height:1px;background:#fff"></div>
<!-- document tab -->
<div class="a" style="left:285px;top:780px;width:1368px;height:1px;background:#808080"></div>
<div class="a" style="left:201px;top:780px;width:85px;height:24px;background:#f0f0f0;border-right:2px solid #000;border-bottom:2px solid #000;border-radius:0 0 4px 6px"></div>
<svg class="a" style="left:205px;top:784px" width="17" height="17" viewBox="0 0 17 17"><path d="M0.5 0.5H10.5L15.5 5.5V15.5H0.5z" fill="#fff" stroke="#000"/><path d="M10.5 0.5V5.5H15.5" fill="none" stroke="#000"/><path d="M1 3.5H3M2.5 5V9.5M1 9.5H3M8.5 4.5V11.5M8 4.5H10M7 11.5H9M2.5 13V15" stroke="#f00" fill="none"/><path d="M4 2h1.5l2 2.5-2 2.5H4z" fill="none" stroke="#000"/><path d="M5.5 8.5v5M3 10l2.5 1.5 3-1.5M3 14l2.5-2.5" fill="none" stroke="#000"/></svg>
<div class="t" style="left:225px;top:785px;font-size:12.5px">Design1 *</div>
<div class="a" style="left:1606px;top:786px;width:45px;height:16px;border:1px solid;border-color:#fff #808080 #808080 #fff"></div>
<div class="a" style="left:1621px;top:787px;width:1px;height:14px;background:#a0a0a0"></div>
<div class="a" style="left:1636px;top:787px;width:1px;height:14px;background:#a0a0a0"></div>
<svg class="a" style="left:1606px;top:786px" width="47" height="16"><path d="M10 4L5.5 8L10 12z" fill="#000080"/><path d="M24 4L28.5 8L24 12z" fill="#000080"/><rect x="33.5" y="4.5" width="7" height="5" fill="#fff" stroke="#000080"/><rect x="35.5" y="8.5" width="7" height="5" fill="#fff" stroke="#000080"/><path d="M41 3l2-1v3" stroke="#000080" fill="none"/></svg>
<div class="a" style="left:0;top:808px;width:1679px;height:1px;background:#a0a0a0"></div>
<div class="a" style="left:0;top:803px;width:195px;height:1px;background:#fff"></div>
<div class="a" style="left:1653px;top:806px;width:26px;height:1px;background:#a0a0a0"></div>

<!-- RIGHT TOOLBAR STRIP -->
<div class="a" style="left:1653px;top:136px;width:1px;height:668px;background:#a0a0a0"></div>
<svg class="a" style="left:1654px;top:141px" width="25" height="196">
 <g stroke="#a0a0a0" fill="none" stroke-width="1">
  <path d="M6.5 9.5h11v12h-11z"/><circle cx="12" cy="16" r="3"/><path d="M7 7h2M15 7h2"/>
 </g>
 <g fill="#a0a0a0">
  <rect x="5" y="30" width="14" height="6"/><rect x="5" y="51" width="3" height="3"/><rect x="14" y="51" width="3" height="3"/><rect x="5" y="72" width="14" height="6"/><rect x="5" y="93" width="14" height="6"/><rect x="5" y="114" width="11" height="7"/><rect x="5" y="135" width="14" height="7"/><rect x="5" y="158" width="14" height="5"/><rect x="5" y="179" width="14" height="6"/>
 </g>
 <g stroke="#a0a0a0" fill="none" stroke-width="1">
  <path d="M5.5 36.5h13v5h-13zM7 39h2M11 39h2M15 39h2"/>
  <path d="M5.5 49.5h5v5h-5zM13.5 49.5h5v5h-5zM6 59h4M14 59h4M7 57v3M15 57v3"/>
  <path d="M5.5 78.5h13v5h-13zM7 81h2M11 81h2"/>
  <path d="M5.5 99.5h13v5h-13zM7 102h2M11 102h2M15 102h2"/>
  <path d="M5.5 121.5h13v5h-13zM7 124h2M11 124h2M15 124h2M18 114v7"/>
  <path d="M5.5 142.5h13v5h-13zM15 144v3"/>
  <path d="M5.5 163.5h13v5h-13zM7 166h2M11 166h2M15 166h2"/>
  <path d="M5.5 185.5h13v5h-13zM7 188h2M11 188h2M15 188h2"/>
  <path d="M5.5 200.5h13"/>
 </g>
</svg>
<div class="a" style="left:1651px;top:338px;width:28px;height:324px;display:flex;flex-direction:column;align-items:center;font-family:'Liberation Sans',sans-serif;font-weight:normal;font-size:26px;line-height:26.8px;-webkit-text-stroke:1.6px #0c2c48;paint-order:stroke fill">
 <span style="color:#5ee8f4">如</span><span style="color:#58e0f0">果</span><span style="color:#50d4ec">邪</span><span style="color:#46c4e6">恶</span><span style="color:#34a8dc">是</span><span style="color:#2c98d4">华</span><span style="color:#2490cc">丽</span><span style="color:#1e88c8">残</span><span style="color:#1a80c4">酷</span><span style="color:#1878c0">的</span><span style="color:#1a80c4">乐</span><span style="color:#1878c0">章</span>
</div>
<!-- SCOPE WINDOW -->
<div class="a" style="left:969px;top:234px;width:616px;height:463px;border-radius:7px 7px 5px 5px;box-shadow:2px 3px 8px rgba(0,0,0,.35)"></div>
<div class="a" style="left:969px;top:234px;width:616px;height:463px;border-radius:7px 7px 5px 5px;border:1px solid #5a646e;background:linear-gradient(90deg,#f8fafc 0,#fbfcfd 300px,#c4daf0 310px,#e8f4ff 314px,#ffffff 326px,#eef4fa 333px,#8ea4bc 338px,#a2b6cc 345px,#adc0d8 365px,#b6c8dd 500px,#bccde0 100%)"></div>
<div class="a" style="left:970px;top:235px;width:614px;height:461px;border-radius:6px 6px 4px 4px;border:1px solid rgba(255,255,255,.6)"></div>
<div class="t" style="left:977px;top:243px;font-size:12.5px;color:#000;">Four channel oscilloscope-XSC1</div>
<div class="a" style="left:1531px;top:234px;width:47px;height:20px;border:1px solid #6f7f90;border-top:none;border-radius:0 0 4px 4px;background:linear-gradient(#c8d7e6,#b8cadd)"></div>
<svg class="a" style="left:1548px;top:238px" width="14" height="12"><path d="M2.5 2L11.5 10M11.5 2L2.5 10" stroke="#555" stroke-width="3.6" stroke-linecap="round"/><path d="M2.5 2L11.5 10M11.5 2L2.5 10" stroke="#fff" stroke-width="2"/></svg>
<div class="a" style="left:976px;top:262px;width:602px;height:428px;background:#f0f0f0;border:1px solid #8a98a6"></div>
<div class="a" style="left:976px;top:263px;width:602px;height:251px;background:#000;border:3px solid #8a8a8a;border-top-color:#7a7a7a"></div>
<svg class="a" style="left:976px;top:263px" width="602" height="251"><path d="M70.5 12V241" stroke="#c8c8c8" stroke-dasharray="3 3" stroke-dashoffset="1" stroke-width="1"/><path d="M128.5 12V241" stroke="#c8c8c8" stroke-dasharray="3 3" stroke-dashoffset="1" stroke-width="1"/><path d="M185.5 12V241" stroke="#c8c8c8" stroke-dasharray="3 3" stroke-dashoffset="1" stroke-width="1"/><path d="M243.5 12V241" stroke="#c8c8c8" stroke-dasharray="3 3" stroke-dashoffset="1" stroke-width="1"/><path d="M301.5 12V241" stroke="#c8c8c8" stroke-dasharray="3 3" stroke-dashoffset="1" stroke-width="1"/><path d="M359.5 12V241" stroke="#c8c8c8" stroke-dasharray="3 3" stroke-dashoffset="1" stroke-width="1"/><path d="M417.5 12V241" stroke="#c8c8c8" stroke-dasharray="3 3" stroke-dashoffset="1" stroke-width="1"/><path d="M474.5 12V241" stroke="#c8c8c8" stroke-dasharray="3 3" stroke-dashoffset="1" stroke-width="1"/><path d="M532.5 12V241" stroke="#c8c8c8" stroke-dasharray="3 3" stroke-dashoffset="1" stroke-width="1"/><path d="M12 50.5H590" stroke="#c8c8c8" stroke-dasharray="3 3" stroke-width="1"/><path d="M12 88.5H590" stroke="#c8c8c8" stroke-dasharray="3 3" stroke-width="1"/><path d="M12 165.5H590" stroke="#c8c8c8" stroke-dasharray="3 3" stroke-width="1"/><path d="M12 203.5H590" stroke="#c8c8c8" stroke-dasharray="3 3" stroke-width="1"/><rect x="12.5" y="12.5" width="578" height="229" fill="none" stroke="#fff" stroke-width="1"/><path d="M12 126.5H590" stroke="#fff" stroke-width="1.2"/><path d="M16.5 127v2M23.5 127v2M30.5 127v2M37.5 127v2M44.5 127v2M51.5 127v2M58.5 127v2M65.5 127v2M72.5 127v2M79.5 127v2M86.5 127v2M93.5 127v2M100.5 127v2M107.5 127v2M114.5 127v2M121.5 127v2M128.5 127v2M135.5 127v2M142.5 127v2M149.5 127v2M156.5 127v2M163.5 127v2M170.5 127v2M177.5 127v2M184.5 127v2M191.5 127v2M198.5 127v2M205.5 127v2M212.5 127v2M219.5 127v2M226.5 127v2M233.5 127v2M240.5 127v2M247.5 127v2M254.5 127v2M261.5 127v2M268.5 127v2M275.5 127v2M282.5 127v2M289.5 127v2M296.5 127v2M303.5 127v2M310.5 127v2M317.5 127v2M324.5 127v2M331.5 127v2M338.5 127v2M345.5 127v2M352.5 127v2M359.5 127v2M366.5 127v2M373.5 127v2M380.5 127v2M387.5 127v2M394.5 127v2M401.5 127v2M408.5 127v2M415.5 127v2M422.5 127v2M429.5 127v2M436.5 127v2M443.5 127v2M450.5 127v2M457.5 127v2M464.5 127v2M471.5 127v2M478.5 127v2M485.5 127v2M492.5 127v2M499.5 127v2M506.5 127v2M513.5 127v2M520.5 127v2M527.5 127v2M534.5 127v2M541.5 127v2M548.5 127v2M555.5 127v2M562.5 127v2M569.5 127v2M576.5 127v2M583.5 127v2" stroke="#ccc" stroke-width="1"/><path d="M12 113.5H33.60000000000002L35.5 140.5H56.40000000000009L60.200000000000045 113.5H81.20000000000005L83.90000000000009 140.5H105.20000000000005L107.90000000000009 113.5H128.9000000000001L131.9000000000001 140.5H153.70000000000005L155.5999999999999 113.5H178.4000000000001L180.29999999999995 140.5H202.0999999999999L204.4000000000001 113.5H226.0999999999999L228.79999999999995 140.5H250.0999999999999L252.79999999999995 113.5H274.5L277.5999999999999 140.5H298.5L302.29999999999995 113.5H319" fill="none" stroke="#ff1010" stroke-width="1.3"/><path d="M12 189.5H292l2 2l2 0l2 -2H319" fill="none" stroke="#ff1010" stroke-width="1.2"/><circle cx="12.5" cy="189.5" r="3" fill="none" stroke="#e020e0" stroke-width="1"/><path d="M12.5 12V241" stroke="#00e000" stroke-width="1.3"/><path d="M4 3H22V5H4z" fill="#00e0f0"/><path d="M5 5H21L12.5 12z" fill="#e020e0"/><path d="M11 6h3v4h-3z" fill="#ff0" opacity=".8"/></svg>
<div class="a" style="left:979px;top:514px;width:597px;height:16px;background:linear-gradient(90deg,#e6e6e6,#ececec)"></div>
<svg class="a" style="left:981px;top:517px" width="10" height="10"><path d="M7 1.5L3 5L7 8.5z" fill="#555"/></svg>
<svg class="a" style="left:1565px;top:517px" width="10" height="10"><path d="M3 1.5L7 5L3 8.5z" fill="#555"/></svg>
<div class="a" style="left:1378px;top:516px;width:181px;height:11px;border:1px solid #9a9a9a;border-radius:2px;background:linear-gradient(#f4f4f4,#dcdcdc)"></div>
<svg class="a" style="left:1462px;top:518px" width="10" height="8"><path d="M2.5 1v6M4.5 1v6M6.5 1v6" stroke="#444"/></svg>
<div class="a" style="left:978px;top:533px;width:53px;height:58px;border:1px solid;border-color:#fff #a0a0a0 #a0a0a0 #fff;box-shadow:inset 1px 1px 0 #a0a0a0"></div>
<div class="t" style="left:981px;top:543px;font-size:11px;color:#000;">T1</div>
<div class="t" style="left:981px;top:556px;font-size:11px;color:#000;">T2</div>
<div class="t" style="left:981px;top:574px;font-size:11px;color:#000;">T2-T1</div>
<div class="a" style="left:1000px;top:539px;width:13px;height:15px;border:1px solid #8a8a8a;border-radius:3px;background:linear-gradient(#f6f6f6,#dedede)"></div>
<div class="a" style="left:1016px;top:539px;width:13px;height:15px;border:1px solid #8a8a8a;border-radius:3px;background:linear-gradient(#f6f6f6,#dedede)"></div>
<svg class="a" style="left:1000px;top:539px" width="30" height="15"><path d="M3 7.5L7 3.5V6H10V9H7V11.5z" fill="#000"/><path d="M26 7.5L22 3.5V6H19V9H22V11.5z" fill="#000"/></svg>
<div class="a" style="left:1000px;top:557px;width:13px;height:15px;border:1px solid #8a8a8a;border-radius:3px;background:linear-gradient(#f6f6f6,#dedede)"></div>
<div class="a" style="left:1016px;top:557px;width:13px;height:15px;border:1px solid #8a8a8a;border-radius:3px;background:linear-gradient(#f6f6f6,#dedede)"></div>
<svg class="a" style="left:1000px;top:557px" width="30" height="15"><path d="M3 7.5L7 3.5V6H10V9H7V11.5z" fill="#000"/><path d="M26 7.5L22 3.5V6H19V9H22V11.5z" fill="#000"/></svg>
<div class="a" style="left:1032px;top:532px;width:482px;height:60px;background:#fff;border:1px solid;border-color:#808080 #e8e8e8 #e8e8e8 #808080;box-shadow:inset 1px 1px 0 #404040"></div>
<div class="t" style="left:1057px;top:536px;font-size:11px;color:#000;">Time</div>
<div class="t" style="left:1048px;top:549px;font-size:11px;color:#000;">7.114 s</div>
<div class="t" style="left:1048px;top:562px;font-size:11px;color:#000;">7.114 s</div>
<div class="t" style="left:1048px;top:575px;font-size:11px;color:#000;">0.000 s</div>
<div class="t" style="left:1122px;top:536px;font-size:11px;color:#000;">Channel_A</div>
<div class="t" style="left:1126px;top:549px;font-size:11px;color:#000;">17.389 V</div>
<div class="t" style="left:1126px;top:562px;font-size:11px;color:#000;">17.389 V</div>
<div class="t" style="left:1129px;top:575px;font-size:11px;color:#000;">0.000 V</div>
<div class="t" style="left:1202px;top:536px;font-size:11px;color:#000;">Channel_B</div>
<div class="t" style="left:1203px;top:549px;font-size:11px;color:#000;">-16.475 V</div>
<div class="t" style="left:1203px;top:562px;font-size:11px;color:#000;">-16.475 V</div>
<div class="t" style="left:1208px;top:575px;font-size:11px;color:#000;">0.000 V</div>
<div class="t" style="left:1282px;top:536px;font-size:11px;color:#000;">Channel_C</div>
<div class="t" style="left:1362px;top:536px;font-size:11px;color:#000;">Channel_D</div>
<div class="a" style="left:1522px;top:533px;width:51px;height:17px;border:1px solid #707070;border-radius:2px;background:linear-gradient(#f4f4f4,#ebebeb 50%,#dadada)"></div><div class="t" style="left:1522px;top:533px;width:51px;height:17px;display:flex;align-items:center;justify-content:center;font-size:11px;color:#000">Reverse</div>
<div class="a" style="left:1522px;top:553px;width:51px;height:17px;border:1px solid #707070;border-radius:2px;background:linear-gradient(#f4f4f4,#ebebeb 50%,#dadada)"></div><div class="t" style="left:1522px;top:553px;width:51px;height:17px;display:flex;align-items:center;justify-content:center;font-size:11px;color:#000">Save</div>
<div class="t" style="left:1528px;top:576px;font-size:11px;color:#000;">GND</div>
<div class="a" style="left:1553px;top:576px;width:12px;height:12px;border-radius:50%;border:1px solid #b0b0b0;background:radial-gradient(#e8e8e8,#f8f8f8)"></div>
<div class="a" style="left:976px;top:600px;width:166px;height:85px;border:1px solid #d5dfe5;border-radius:3px"></div><div class="a" style="left:982px;top:594px;width:50px;height:12px;background:#f0f0f0"></div><div class="t" style="left:985px;top:595px;font-size:11px;color:#000;">Timebase</div>
<div class="a" style="left:1144px;top:600px;width:233px;height:85px;border:1px solid #d5dfe5;border-radius:3px"></div><div class="a" style="left:1150px;top:594px;width:58px;height:12px;background:#f0f0f0"></div><div class="t" style="left:1153px;top:595px;font-size:11px;color:#000;">Channel_A</div>
<div class="a" style="left:1378px;top:600px;width:196px;height:85px;border:1px solid #d5dfe5;border-radius:3px"></div><div class="a" style="left:1384px;top:594px;width:42px;height:12px;background:#f0f0f0"></div><div class="t" style="left:1387px;top:595px;font-size:11px;color:#000;">Trigger</div>
<div class="t" style="left:981px;top:614px;font-size:11px;color:#000;">Scale:</div>
<div class="a" style="left:1028px;top:610px;width:113px;height:18px;background:#fff;border:1px solid #e2e6ea;border-top-color:#abadb3;border-radius:2px"></div><div class="t" style="left:1032px;top:614px;font-size:11px;color:#000;">20 ms/Div</div>
<div class="t" style="left:980px;top:633px;font-size:11px;color:#000;">X pos.(Div):</div>
<div class="a" style="left:1052px;top:629px;width:89px;height:19px;background:#fff;border:1px solid #e2e6ea;border-top-color:#abadb3;border-radius:2px"></div><div class="t" style="left:1056px;top:633px;font-size:11px;color:#000;">0</div>
<div class="a" style="left:982px;top:659px;width:25px;height:18px;border:1px solid #2c628b;border-radius:2px;background:linear-gradient(#a8d8f8,#6ab6ea 50%,#58a8e0)"></div><div class="t" style="left:982px;top:659px;width:25px;height:18px;display:flex;align-items:center;justify-content:center;font-size:11px;color:#000">Y/T</div>
<div class="a" style="left:1011px;top:659px;width:34px;height:18px;border:1px solid #707070;border-radius:2px;background:linear-gradient(#f4f4f4,#ebebeb 50%,#dadada)"></div><div class="t" style="left:1011px;top:659px;width:34px;height:18px;display:flex;align-items:center;justify-content:center;font-size:11px;color:#000">A/B &gt;</div>
<div class="a" style="left:1048px;top:659px;width:38px;height:18px;border:1px solid #707070;border-radius:2px;background:linear-gradient(#f4f4f4,#ebebeb 50%,#dadada)"></div><div class="t" style="left:1048px;top:659px;width:38px;height:18px;display:flex;align-items:center;justify-content:center;font-size:11px;color:#000">A+B &gt;</div>
<div class="t" style="left:1148px;top:614px;font-size:11px;color:#000;">Scale:</div>
<div class="a" style="left:1197px;top:608px;width:101px;height:19px;background:#fff;border:1px solid #e2e6ea;border-top-color:#abadb3;border-radius:2px"></div><div class="t" style="left:1201px;top:612px;font-size:11px;color:#000;">10&nbsp; V/Div</div>
<div class="t" style="left:1149px;top:633px;font-size:11px;color:#000;">Y pos.(Div):</div>
<div class="a" style="left:1221px;top:629px;width:77px;height:17px;background:#fff;border:1px solid #e2e6ea;border-top-color:#abadb3;border-radius:2px"></div><div class="t" style="left:1225px;top:633px;font-size:11px;color:#000;">0</div>
<div class="a" style="left:1150px;top:664px;width:22px;height:18px;border:1px solid #707070;border-radius:2px;background:linear-gradient(#f4f4f4,#ebebeb 50%,#dadada)"></div><div class="t" style="left:1150px;top:664px;width:22px;height:18px;display:flex;align-items:center;justify-content:center;font-size:11px;color:#000">AC</div>
<div class="a" style="left:1176px;top:664px;width:22px;height:18px;border:1px solid #707070;border-radius:2px;background:linear-gradient(#f4f4f4,#ebebeb 50%,#dadada)"></div><div class="t" style="left:1176px;top:664px;width:22px;height:18px;display:flex;align-items:center;justify-content:center;font-size:11px;color:#000">0</div>
<div class="a" style="left:1201px;top:664px;width:22px;height:18px;border:1px solid #2c628b;border-radius:2px;background:linear-gradient(#a8d8f8,#6ab6ea 50%,#58a8e0)"></div><div class="t" style="left:1201px;top:664px;width:22px;height:18px;display:flex;align-items:center;justify-content:center;font-size:11px;color:#000">DC</div>
<div class="a" style="left:1227px;top:664px;width:17px;height:18px;border:1px solid #707070;border-radius:2px;background:linear-gradient(#f4f4f4,#ebebeb 50%,#dadada)"></div><div class="t" style="left:1227px;top:664px;width:17px;height:18px;display:flex;align-items:center;justify-content:center;font-size:11px;color:#000">-</div>
<div class="a" style="left:1265px;top:666px;width:12px;height:12px;border-radius:50%;border:1px solid #b0b0b0;background:radial-gradient(#e8e8e8,#f8f8f8)"></div><div class="a" style="left:1268px;top:669px;width:6px;height:6px;border-radius:50%;background:radial-gradient(#c8c8c8,#8a8a8a)"></div>
<div class="a" style="left:1293px;top:666px;width:12px;height:12px;border-radius:50%;border:1px solid #b0b0b0;background:radial-gradient(#e8e8e8,#f8f8f8)"></div><div class="a" style="left:1296px;top:669px;width:6px;height:6px;border-radius:50%;background:radial-gradient(#c8c8c8,#8a8a8a)"></div>
<div class="a" style="left:1322px;top:666px;width:12px;height:12px;border-radius:50%;border:1px solid #b0b0b0;background:radial-gradient(#e8e8e8,#f8f8f8)"></div>
<div class="a" style="left:1350px;top:666px;width:12px;height:12px;border-radius:50%;border:1px solid #b0b0b0;background:radial-gradient(#e8e8e8,#f8f8f8)"></div>
<svg class="a" style="left:1316px;top:610px" width="42" height="42"><defs><clipPath id="kc"><circle cx="21" cy="21" r="16.8"/></clipPath></defs><circle cx="21" cy="21" r="17" fill="#8a8a8a" stroke="#6a6a6a" stroke-width=".7"/><g clip-path="url(#kc)"><path d="M0 34L40 10V0H0z" fill="#c2c2c2"/><path d="M3 20L14 8L20 5L6 23z" fill="#f4f4f4"/></g><circle cx="21" cy="20" r="8.5" fill="none" stroke="#eaeaea" stroke-width="2.2"/><circle cx="21" cy="20" r="6.5" fill="#8e8e8e"/><path d="M27 19.5H38.5V22H27z" fill="#f0f0f0"/><path d="M14 35.5Q21 39 28 35.5" stroke="#111" stroke-width="2.2" fill="none"/></svg>
<div class="t" style="left:1333px;top:604px;font-size:11px;color:#000;">A</div>
<div class="t" style="left:1360px;top:626px;font-size:11px;color:#000;">B</div>
<div class="t" style="left:1333px;top:650px;font-size:11px;color:#000;">C</div>
<div class="t" style="left:1307px;top:626px;font-size:11px;color:#000;">D</div>
<div class="t" style="left:1390px;top:613px;font-size:11px;color:#000;">Edge:</div>
<div class="a" style="left:1440px;top:609px;width:25px;height:14px;border:1px solid #2c628b;border-radius:2px;background:linear-gradient(#a8d8f8,#6ab6ea 50%,#58a8e0)"></div>
<svg class="a" style="left:1444px;top:610px" width="18" height="12"><path d="M4 9H9V3H14M8 6L9 3L10 6" stroke="#000" fill="none" stroke-width="1.2"/></svg>
<div class="a" style="left:1470px;top:609px;width:25px;height:14px;border:1px solid #707070;border-radius:2px;background:linear-gradient(#f4f4f4,#ebebeb 50%,#dadada)"></div>
<svg class="a" style="left:1474px;top:610px" width="18" height="12"><path d="M4 3H9V9H14M8 6L9 9L10 6" stroke="#000" fill="none" stroke-width="1.2"/></svg>
<div class="t" style="left:1527px;top:610px;font-size:11px;color:#000;">Ext</div>
<div class="a" style="left:1547px;top:610px;width:12px;height:12px;border-radius:50%;border:1px solid #b0b0b0;background:radial-gradient(#e8e8e8,#f8f8f8)"></div>
<div class="t" style="left:1390px;top:633px;font-size:11px;color:#000;">Level:</div>
<div class="a" style="left:1439px;top:629px;width:98px;height:20px;background:#fff;border:1px solid #e2e6ea;border-top-color:#abadb3;border-radius:2px"></div><div class="t" style="left:1443px;top:633px;font-size:11px;color:#000;">0</div>
<div class="a" style="left:1538px;top:629px;width:30px;height:20px;background:#fff;border:1px solid #e2e6ea;border-top-color:#abadb3;border-radius:2px"></div><div class="t" style="left:1542px;top:633px;font-size:11px;color:#000;">V</div>
<div class="a" style="left:1381px;top:663px;width:34px;height:17px;border:1px solid #707070;border-radius:2px;background:linear-gradient(#f4f4f4,#ebebeb 50%,#dadada)"></div><div class="t" style="left:1381px;top:663px;width:34px;height:17px;display:flex;align-items:center;justify-content:center;font-size:11px;color:#000">Single</div>
<div class="a" style="left:1417px;top:663px;width:40px;height:17px;border:1px solid #707070;border-radius:2px;background:linear-gradient(#f4f4f4,#ebebeb 50%,#dadada)"></div><div class="t" style="left:1417px;top:663px;width:40px;height:17px;display:flex;align-items:center;justify-content:center;font-size:11px;color:#000">Normal</div>
<div class="a" style="left:1459px;top:663px;width:30px;height:17px;border:1px solid #707070;border-radius:2px;background:linear-gradient(#f4f4f4,#ebebeb 50%,#dadada)"></div><div class="t" style="left:1459px;top:663px;width:30px;height:17px;display:flex;align-items:center;justify-content:center;font-size:11px;color:#000">Auto</div>
<div class="a" style="left:1491px;top:663px;width:31px;height:17px;border:1px solid #2c628b;border-radius:2px;background:linear-gradient(#a8d8f8,#6ab6ea 50%,#58a8e0)"></div><div class="t" style="left:1491px;top:663px;width:31px;height:17px;display:flex;align-items:center;justify-content:center;font-size:11px;color:#000">None</div>
<div class="a" style="left:1524px;top:663px;width:25px;height:17px;border:1px solid #2c628b;border-radius:2px;background:linear-gradient(#a8d8f8,#6ab6ea 50%,#58a8e0)"></div><div class="t" style="left:1524px;top:663px;width:25px;height:17px;display:flex;align-items:center;justify-content:center;font-size:11px;color:#000">A &gt;</div>
<div class="a" style="left:1551px;top:663px;width:22px;height:17px;border:1px solid #707070;border-radius:2px;background:linear-gradient(#f4f4f4,#ebebeb 50%,#dadada)"></div><div class="t" style="left:1551px;top:663px;width:22px;height:17px;display:flex;align-items:center;justify-content:center;font-size:11px;color:#a0a0a0">Ext</div>
<!-- SPREADSHEET VIEW -->
<div class="a" style="left:6px;top:812px;width:14px;height:13px;border:1px solid;border-color:#fff #808080 #808080 #fff"></div>
<svg class="a" style="left:9px;top:814px" width="9" height="9"><path d="M1 1l7 7M8 1l-7 7" stroke="#000" stroke-width="2"/></svg>
<div class="a" style="left:6px;top:827px;width:14px;height:14px;border:1px solid;border-color:#fff #808080 #808080 #fff"></div>
<svg class="a" style="left:10px;top:830px" width="7" height="8"><path d="M2 1l4 3-4 3z" fill="#aaa"/></svg>
<div class="a" style="left:2px;top:844px;width:22px;height:140px;background:linear-gradient(#cfdeec,#b9cde0)"></div>
<div class="t" style="left:4px;top:981px;font-family:'Liberation Mono',monospace;font-size:10px;color:#666;transform:rotate(-90deg);transform-origin:0 0;line-height:11px">Spreadsheet View</div>
<div class="a" style="left:27px;top:814px;width:1648px;height:149px;border-top:1px solid #fff;border-left:1px solid #fff;border-right:2px solid #808080;border-bottom:2px solid #808080"></div><div class="a" style="left:29px;top:816px;width:1643px;height:144px;background:#fff;border:1px solid #8c939b;border-top-width:2px;border-left-width:2px"></div>
<div class="t" style="left:53px;top:823px;font-size:12.5px;letter-spacing:0.15px">Multisim&nbsp; -&nbsp; 2014年1月20日, 15:13:29</div>
<!-- tabs -->
<div class="a" style="left:29px;top:961px;width:48px;height:23px;background:#f0f0f0;border-left:1px solid #a0a0a0;border-right:1px solid #808080;border-bottom:2px solid #808080;border-radius:0 0 3px 3px"></div>
<div class="t" style="left:34px;top:970px;font-size:11.5px;letter-spacing:-0.2px">Results</div>
<div class="a" style="left:77px;top:962px;width:40px;height:20px;background:#f0f0f0;border:1px solid #a0a0a0;border-top:none;border-bottom:2px solid #909090;border-right-color:#808080;border-radius:0 0 3px 3px"></div>
<div class="t" style="left:81px;top:967px;font-size:11.5px;letter-spacing:-0.3px">Nets</div>
<div class="a" style="left:119px;top:962px;width:70px;height:20px;background:#f0f0f0;border:1px solid #a0a0a0;border-top:none;border-bottom:2px solid #909090;border-right-color:#808080;border-radius:0 0 3px 3px"></div>
<div class="t" style="left:123px;top:967px;font-size:11.5px;letter-spacing:-0.3px">Components</div>
<div class="a" style="left:191px;top:962px;width:77px;height:20px;background:#f0f0f0;border:1px solid #a0a0a0;border-top:none;border-bottom:2px solid #909090;border-right-color:#808080;border-radius:0 0 3px 3px"></div>
<div class="t" style="left:195px;top:967px;font-size:11.5px;letter-spacing:-0.3px">Copper layers</div>
<div class="a" style="left:270px;top:962px;width:59px;height:20px;background:#f0f0f0;border:1px solid #a0a0a0;border-top:none;border-bottom:2px solid #909090;border-right-color:#808080;border-radius:0 0 3px 3px"></div>
<div class="t" style="left:274px;top:967px;font-size:11.5px;letter-spacing:-0.3px">Simulation</div>

<!-- STATUS BAR -->
<div class="a" style="left:0;top:992px;width:1679px;height:18px;background:#efebeb"></div>
<div class="t" style="left:2px;top:995px;font-size:12.5px">For Help, press F1</div>
<div class="t" style="left:1101px;top:995px;font-size:12px">-</div>
<div class="a" style="left:1249px;top:993px;width:1px;height:16px;background:#c8c8c8"></div>
<div class="t" style="left:1254px;top:995px;font-size:12.5px">Design1: Simulating...</div>
<div class="a" style="left:1432px;top:993px;width:1px;height:16px;background:#c8c8c8"></div>
<div class="t" style="left:1437px;top:995px;font-size:12.5px">Tran: 7.220 s</div>
<div class="a" style="left:1615px;top:993px;width:1px;height:16px;background:#c8c8c8"></div>
<svg class="a" style="left:1617px;top:996px" width="60" height="13"><rect x="3" y="0" width="6" height="12" fill="#00e000"/><path d="M3.5 12V0.5H9" stroke="#2a8a2a" fill="none"/><rect x="11" y="0" width="6" height="12" fill="#00e000"/><path d="M11.5 12V0.5H17" stroke="#2a8a2a" fill="none"/><rect x="19" y="0" width="6" height="12" fill="#e2e2e2"/><path d="M19.5 12V0.5H25" stroke="#d8d8c8" fill="none"/><rect x="27" y="0" width="6" height="12" fill="#e2e2e2"/><path d="M27.5 12V0.5H33" stroke="#d8d8c8" fill="none"/><rect x="35" y="0" width="6" height="12" fill="#e2e2e2"/><path d="M35.5 12V0.5H41" stroke="#d8d8c8" fill="none"/><rect x="43" y="0" width="6" height="12" fill="#00e000"/><path d="M43.5 12V0.5H49" stroke="#2a8a2a" fill="none"/><rect x="51" y="0" width="6" height="12" fill="#00e000"/><path d="M51.5 12V0.5H57" stroke="#2a8a2a" fill="none"/></svg>
<!-- TASKBAR -->
<div class="a" style="left:0;top:1010px;width:1679px;height:39px;background:linear-gradient(90deg,#3b92d6 0,#3a8cd0 400px,#2f7fc6 900px,#2a74bd 1200px,#22599a 1350px,#1c4c84 1480px,#183f70 1600px,#163a68 100%)"></div>
<div class="a" style="left:0;top:1010px;width:1679px;height:39px;background:linear-gradient(180deg,rgba(20,40,70,.6) 0,rgba(255,255,255,.18) 1px,rgba(255,255,255,.06) 45%,rgba(0,0,0,.04) 100%)"></div>
<div class="a" style="left:1180px;top:1010px;width:120px;height:39px;background:linear-gradient(60deg,transparent 40%,rgba(255,255,255,.35) 50%,transparent 60%)"></div>
<!-- highlighted buttons -->
<div class="a" style="left:122px;top:1011px;width:58px;height:38px;border:1px solid rgba(180,220,255,.55);border-radius:3px;background:linear-gradient(rgba(255,255,255,.28),rgba(255,255,255,.1))"></div>
<div class="a" style="left:370px;top:1011px;width:58px;height:38px;border:1px solid rgba(180,220,255,.5);border-radius:3px;background:linear-gradient(rgba(255,255,255,.22),rgba(255,255,255,.08))"></div>
<div class="a" style="left:431px;top:1011px;width:58px;height:38px;border:1px solid rgba(180,220,255,.5);border-radius:3px;background:linear-gradient(rgba(255,255,255,.22),rgba(255,255,255,.08))"></div>
<div class="a" style="left:493px;top:1011px;width:58px;height:38px;border:1px solid rgba(180,220,255,.5);border-radius:3px;background:linear-gradient(rgba(255,255,255,.22),rgba(255,255,255,.08))"></div>
<div class="a" style="left:555px;top:1011px;width:58px;height:38px;border:1px solid rgba(180,220,255,.5);border-radius:3px;background:linear-gradient(rgba(255,255,255,.22),rgba(255,255,255,.08))"></div>
<div class="a" style="left:617px;top:1011px;width:58px;height:38px;border:1px solid rgba(180,220,255,.5);border-radius:3px;background:linear-gradient(rgba(255,255,255,.22),rgba(255,255,255,.08))"></div>
<div class="a" style="left:679px;top:1011px;width:58px;height:38px;border:1px solid rgba(200,230,255,.7);border-radius:3px;background:linear-gradient(rgba(255,255,255,.38),rgba(255,255,255,.18))"></div>
<div class="a" style="left:741px;top:1011px;width:58px;height:38px;border:1px solid rgba(180,220,255,.5);border-radius:3px;background:linear-gradient(rgba(255,255,255,.22),rgba(255,255,255,.08))"></div>
<div class="a" style="left:803px;top:1011px;width:58px;height:38px;border:1px solid rgba(180,220,255,.5);border-radius:3px;background:linear-gradient(rgba(255,255,255,.22),rgba(255,255,255,.08))"></div>
<div class="a" style="left:865px;top:1011px;width:58px;height:38px;border:1px solid rgba(180,220,255,.5);border-radius:3px;background:linear-gradient(rgba(255,255,255,.22),rgba(255,255,255,.08))"></div>
<svg class="a" style="left:0;top:1010px" width="940" height="39">
 <defs>
  <radialGradient id="orb" cx="50%" cy="35%" r="60%"><stop offset="0" stop-color="#b8e4ff"/><stop offset=".45" stop-color="#3a8ad0"/><stop offset="1" stop-color="#10386a"/></radialGradient>
 </defs>
 <!-- start orb -->
 <circle cx="27" cy="20" r="18.5" fill="url(#orb)" stroke="#1a3a60" stroke-width="1"/>
 <path d="M17 12q4-2 9 0v7q-5-2-9 0z" fill="#f25a22"/><path d="M28 12q4-2 9 0v7q-5-2-9 0z" fill="#7cc23a"/>
 <path d="M17 21q4-2 9 0v7q-5-2-9 0z" fill="#2a9af0"/><path d="M28 21q4-2 9 0v7q-5-2-9 0z" fill="#ffc218"/>
 <!-- IE -->
 <defs><radialGradient id="ieg" cx="40%" cy="35%" r="70%"><stop offset="0" stop-color="#9ee0ff"/><stop offset=".5" stop-color="#2a90e8"/><stop offset="1" stop-color="#0a4aa8"/></radialGradient></defs>
 <circle cx="90" cy="20" r="11" fill="url(#ieg)"/><path d="M84.5 18.5A5.5 5 0 0 1 95.5 18.5z" fill="#3a8ad0"/><path d="M84.5 22.5H102V27H95A6 5 0 0 1 84.5 22.5z" fill="#3a8cd2"/>
 <path d="M76 33C70 28 84 12 100 9C108 8 106 13 102 17" fill="none" stroke="#e8b028" stroke-width="2.2"/>
 <path d="M76 33C79 36 88 33 95 28" fill="none" stroke="#e8b028" stroke-width="2.2"/>
 <!-- Chrome -->
 <circle cx="150" cy="20" r="14.5" fill="#dd3a2a"/>
 <path d="M150 20L162.5 27.3A14.5 14.5 0 0 1 137.5 27.3z" fill="#3aa84a"/>
 <path d="M150 20L164.5 20A14.5 14.5 0 0 1 150 34.5z" fill="#ffd22a"/>
 <path d="M150 20L162.6 27.2A14.5 14.5 0 0 1 150 34.5L143 22z" fill="#ffcd28"/>
 <circle cx="150" cy="20" r="6.5" fill="#fff"/><circle cx="150" cy="20" r="5" fill="#3c7ee6"/>
 <!-- terminal -->
 <rect x="198" y="9" width="29" height="23" rx="4" fill="#c8ccd4" stroke="#808890"/><rect x="202" y="13" width="21" height="14" fill="#2a76d8"/><rect x="202" y="13" width="21" height="5" fill="#6ab4f4"/>
 <!-- calculator -->
 <rect x="264" y="6" width="20" height="30" rx="2" fill="#9ab8f0" stroke="#4a68b0" transform="rotate(-6 274 21)"/><rect x="267" y="10" width="14" height="5" fill="#d8e6ff" transform="rotate(-6 274 21)"/>
 <g fill="#fff" transform="rotate(-6 274 21)"><circle cx="269" cy="20" r="1.5"/><circle cx="274" cy="20" r="1.5"/><circle cx="279" cy="20" r="1.5"/><circle cx="269" cy="25" r="1.5"/><circle cx="274" cy="25" r="1.5"/><circle cx="279" cy="25" r="1.5"/><circle cx="269" cy="30" r="1.5"/><circle cx="274" cy="30" r="1.5"/></g>
 <!-- paint -->
 <rect x="320" y="6" width="32" height="32" fill="#fff"/>
 <circle cx="336" cy="22" r="14" fill="#e8d8a0"/><path d="M322 18q8-8 28-2v5q-14-4-28 2z" fill="#e03030"/><path d="M322 24q10-6 28 0v4q-14-4-28 2z" fill="#3a8ad8"/><path d="M324 14q8-6 24 0" stroke="#f0c020" stroke-width="3" fill="none"/>
 <!-- black monitor -->
 <rect x="384" y="6" width="30" height="24" fill="#000" stroke="#8a8a8a" stroke-width="2.5"/><rect x="396" y="31" width="6" height="3" fill="#777"/><rect x="390" y="34" width="18" height="2.5" fill="#777"/>
 <!-- folder -->
 <path d="M445 9h10l2 3h16v22h-28z" fill="#e8c468"/><path d="M445 15h28v19h-28z" fill="#f6dc8a"/><rect x="450" y="8" width="3" height="3" fill="#3a3"/><rect x="465" y="10" width="4" height="3" fill="#e33"/><path d="M452 24h14v9h-14z" fill="#a8d4f4" stroke="#6aa0c8"/>
 <!-- K -->
 <circle cx="522" cy="21" r="14" fill="#1a88d8"/><circle cx="522" cy="21" r="11.5" fill="none" stroke="#fff" stroke-width="2"/><text x="515" y="28" font-family="Liberation Sans" font-weight="bold" font-size="18" fill="#fff">K</text>
 <!-- PADS -->
 <rect x="569" y="4" width="32" height="28" fill="#e07020" stroke="#a04a10"/><text x="571" y="15" font-family="Liberation Sans" font-weight="bold" font-size="10" fill="#fff">PADS</text><path d="M576 18h12v16h-12z" fill="#b8d8f0"/><path d="M584 32l12-14 3 3-12 14z" fill="#f0c030" stroke="#805010"/>
 <!-- notepad -->
 <path d="M634 8l16-4 8 28-16 4z" fill="#b8e0f4" stroke="#6aa0c0"/><path d="M636 12l14-3" stroke="#fff"/>
 <!-- purple -->
 <rect x="694" y="7" width="28" height="27" rx="4" fill="#5a4ea8"/><g stroke="#f0d080" stroke-width="1.3" fill="none"><path d="M699 13h10l3 3h7M699 20h8M712 20h8M699 27h6M706 31v-7M711 31v-4M715 31v-6M719 31v-3"/></g>
 <!-- green notepad -->
 <rect x="756" y="6" width="24" height="30" fill="#fff" stroke="#999"/><rect x="757" y="22" width="22" height="13" fill="#5ac84a"/><text x="760" y="21" font-family="Liberation Mono" font-size="9" fill="#000">∏++</text><path d="M775 30l8-24 2 1-8 24z" fill="#f0a020" stroke="#604010"/>
 <!-- chip magnifier -->
 <path d="M817 18h26v13h-26z" fill="#eee" stroke="#333" stroke-dasharray="2 1"/><circle cx="826" cy="22" r="6" fill="#fff" stroke="#333"/><path d="M834 21l8-10" stroke="#1a3a8a" stroke-width="2"/><path d="M832 25l6 3" stroke="#3ac0e0" stroke-width="2"/>
 <!-- chip lightning -->
 <path d="M880 22l14-8 10 16-14 8z" fill="#555" stroke="#222"/><path d="M877 6l8 0-3 5 6 0-10 10 3-7-5 0z" fill="#f0e020" stroke="#806000" stroke-width=".6"/>
 <text x="913" y="12" font-family="Liberation Sans" font-size="9" fill="#00e8ff">S</text><text x="913" y="21" font-family="Liberation Sans" font-size="9" fill="#00e8ff">T</text><text x="913" y="30" font-family="Liberation Sans" font-size="9" fill="#00e8ff">U</text><text x="913" y="38" font-family="Liberation Sans" font-size="9" fill="#00e8ff">P</text>
</svg>
<!-- tray -->
<svg class="a" style="left:1255px;top:1010px" width="424" height="39">
 <text x="7" y="22" font-family="Liberation Mono" font-size="12" fill="#fff">CH</text>
 <g transform="translate(0,2)"><rect x="29" y="12" width="14" height="9" rx="1" fill="#c8c8c8" stroke="#8a8a8a"/><path d="M31 15h10M31 18h10" stroke="#999"/><path d="M36 12q2-3 6-3" stroke="#ccc" fill="none"/></g>
 <circle cx="57" cy="17" r="7.5" fill="#2a48c8" stroke="#dde" stroke-width="1.2"/><text x="53" y="21.5" font-family="Liberation Sans" font-weight="bold" font-size="11" fill="#fff">?</text>
 <rect x="74" y="6" width="6" height="4" fill="none" stroke="#fff"/><rect x="76" y="4" width="6" height="4" fill="none" stroke="#fff"/><path d="M75 19l3 3 3-3z" fill="#fff"/>
 <path d="M93 17l4-4 4 4z" fill="#fff"/>
 <g transform="translate(0,4)">
 <path d="M115 10v15M115 10h10l-2 3 2 3h-10" fill="#fff" stroke="#fff" stroke-width="1.4"/>
 <ellipse cx="145" cy="17" rx="6" ry="7" fill="#222"/><ellipse cx="145" cy="19" rx="4" ry="4.5" fill="#fff"/><path d="M138 23q7 5 14 0l-1 4h-12z" fill="#e02020"/><path d="M142 13h6l-3 2z" fill="#f0b020"/>
 <path d="M172 11a7 7 0 1 0 6 8" stroke="#e82020" stroke-width="3" fill="none"/><path d="M167 18h8" stroke="#e82020" stroke-width="2"/>
 <rect x="187" y="9" width="15" height="15" fill="none" stroke="#fff" stroke-width="1.4"/><path d="M191 12v9h8" stroke="#fff" stroke-width="2" fill="none"/>
 <path d="M212 10v10M209 10h6M215 14h12v9h-12zM219 23v3h4" stroke="#fff" stroke-width="1.3" fill="none"/>
 <path d="M239 14h4l5-4v15l-5-4h-4z" fill="#fff"/><path d="M251 13q2 4 0 8M253 11q3 6 0 12" stroke="#fff" fill="none"/></g>
 <text x="260" y="17" font-family="Liberation Sans" font-size="12.5" fill="#fff">15:41:12</text>
 <text x="266" y="35" font-family="Liberation Sans" font-size="12.5" fill="#fff">1/20|—</text>
 <path d="M310 16.5l8 0 6-1 8 1 6-1 6 1 4-1 6 0 2 4 2-7 2 3h6l6-1 8 1 8-1 6 1h10" stroke="#30e070" fill="none" stroke-width="1"/><path d="M359.5 1V18" stroke="#30e070"/>
 <path d="M310 36l10 1 8-1 6 1 4 3 5-5 4 4 4-4 4 4 2-10 3 16 2-6 6-2 6 6" stroke="#e04880" fill="none" stroke-width="1"/><path d="M359.5 20V39" stroke="#e04880"/>
 <text x="311" y="13" font-family="Liberation Mono" font-weight="bold" font-size="11.5" fill="#fafa8a">7.68K/31.77K</text>
 <text x="311" y="31" font-family="Liberation Mono" font-weight="bold" font-size="11.5" fill="#18f4ff">116B/20.75K</text>
 <rect x="411.5" y="1.5" width="12" height="37" fill="#1c4678" stroke="rgba(160,190,230,.55)"/><rect x="413" y="3" width="9" height="12" fill="rgba(255,255,255,.12)"/>
</svg>

</body></html>
